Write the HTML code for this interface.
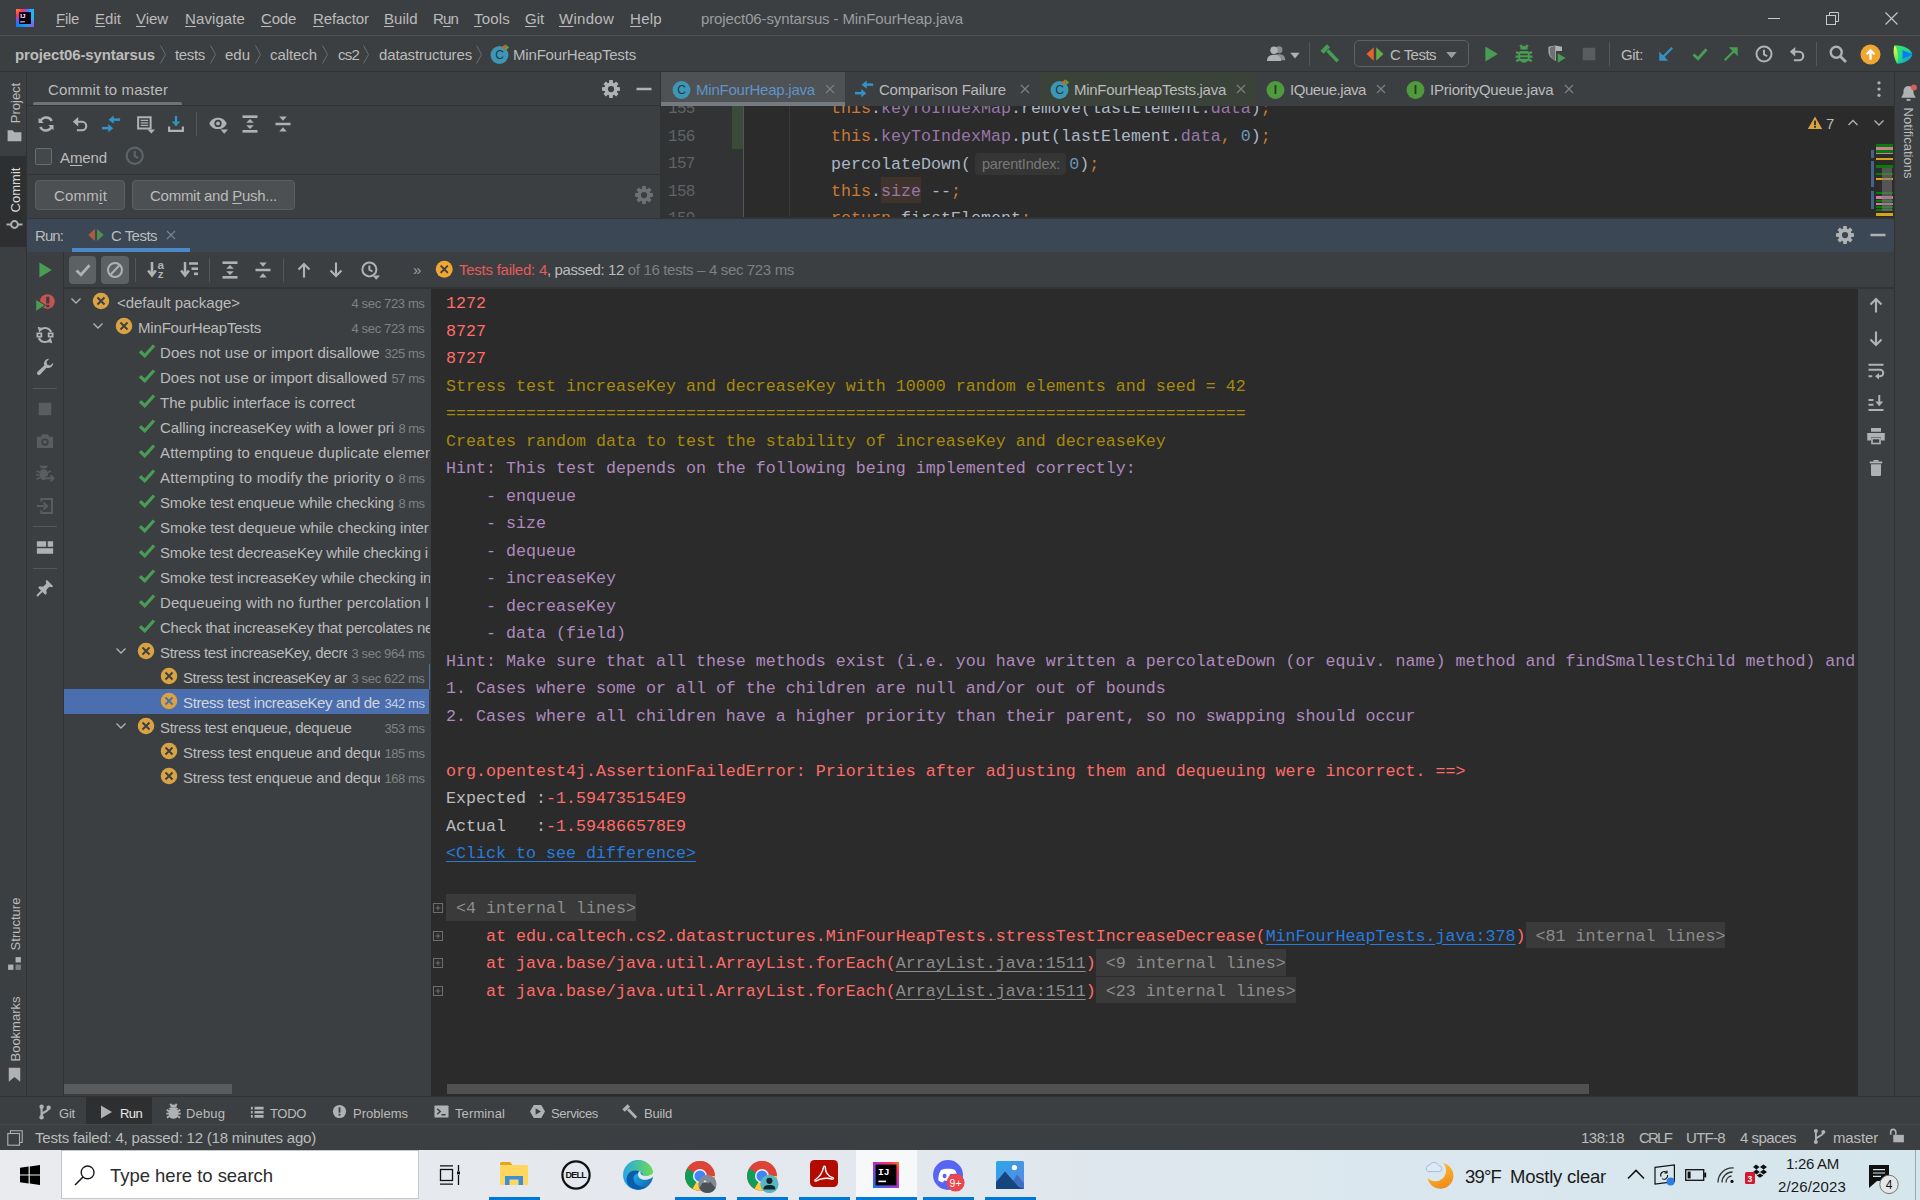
<!DOCTYPE html>
<html lang="en"><head><meta charset="utf-8"><title>project06-syntarsus - MinFourHeap.java</title>
<style>
html,body{margin:0;padding:0;background:#3c3f41;}
body{width:1920px;height:1200px;position:relative;overflow:hidden;font-family:"Liberation Sans",sans-serif;}
div,span.t,svg.i{position:absolute;}
span.t{white-space:pre;}
u{text-decoration:underline;text-underline-offset:1.5px;text-decoration-thickness:1px;}
.clip{overflow:hidden;}
.clip span.t{position:absolute;}
</style></head>
<body>
<div style="left:0px;top:0px;width:1920px;height:36px;background:#3c3f41;"></div>
<div style="left:0px;top:35px;width:1920px;height:1px;background:#515151;"></div>
<svg class="i" style="left:16px;top:9px;" width="18" height="18" viewBox="0 0 18 18"><defs><linearGradient id="ijb" x1="0" y1="0" x2="1" y2="0"><stop offset="0" stop-color="#0d7bf7"/><stop offset="1" stop-color="#20b8fb"/></linearGradient><radialGradient id="ijo" cx="0" cy="0" r="0.8"><stop offset="0" stop-color="#fd8a1c"/><stop offset="0.45" stop-color="#fc2d63"/><stop offset="0.8" stop-color="#b23bd6" stop-opacity="0.6"/><stop offset="1" stop-color="#b23bd6" stop-opacity="0"/></radialGradient><radialGradient id="ijp" cx="1" cy="1" r="0.5"><stop offset="0" stop-color="#9a4be0"/><stop offset="1" stop-color="#9a4be0" stop-opacity="0"/></radialGradient></defs><rect width="18" height="18" fill="url(#ijb)"/><rect width="18" height="18" fill="url(#ijo)"/><rect width="18" height="18" fill="url(#ijp)"/><rect x="3.1" y="3.1" width="11.9" height="11.9" fill="#0c0010"/><text x="4.2" y="8.7" font-family="Liberation Sans,sans-serif" font-weight="700" font-size="6.2" fill="#fff">IJ</text><rect x="4.2" y="12.4" width="4.6" height="0.9" fill="#fff"/></svg>
<span class="t" style="top:9px;line-height:20px;font-size:15px;color:#bbbbbb;left:56px;letter-spacing:-0.293px;"><u>F</u>ile</span>
<span class="t" style="top:9px;line-height:20px;font-size:15px;color:#bbbbbb;left:95px;letter-spacing:0.035px;"><u>E</u>dit</span>
<span class="t" style="top:9px;line-height:20px;font-size:15px;color:#bbbbbb;left:136px;letter-spacing:-0.062px;"><u>V</u>iew</span>
<span class="t" style="top:9px;line-height:20px;font-size:15px;color:#bbbbbb;left:185px;letter-spacing:0.100px;"><u>N</u>avigate</span>
<span class="t" style="top:9px;line-height:20px;font-size:15px;color:#bbbbbb;left:261px;letter-spacing:-0.215px;"><u>C</u>ode</span>
<span class="t" style="top:9px;line-height:20px;font-size:15px;color:#bbbbbb;left:313px;letter-spacing:-0.088px;"><u>R</u>efactor</span>
<span class="t" style="top:9px;line-height:20px;font-size:15px;color:#bbbbbb;left:384px;letter-spacing:0.028px;"><u>B</u>uild</span>
<span class="t" style="top:9px;line-height:20px;font-size:15px;color:#bbbbbb;left:433px;letter-spacing:-0.844px;">R<u>u</u>n</span>
<span class="t" style="top:9px;line-height:20px;font-size:15px;color:#bbbbbb;left:474px;letter-spacing:0.194px;"><u>T</u>ools</span>
<span class="t" style="top:9px;line-height:20px;font-size:15px;color:#bbbbbb;left:525px;letter-spacing:-0.057px;"><u>G</u>it</span>
<span class="t" style="top:9px;line-height:20px;font-size:15px;color:#bbbbbb;left:559px;letter-spacing:0.273px;"><u>W</u>indow</span>
<span class="t" style="top:9px;line-height:20px;font-size:15px;color:#bbbbbb;left:630px;letter-spacing:0.285px;"><u>H</u>elp</span>
<span class="t" style="top:9px;line-height:20px;font-size:15px;color:#9a9da0;left:701px;letter-spacing:-0.126px;">project06-syntarsus - MinFourHeap.java</span>
<div style="left:1768px;top:18px;width:12px;height:1px;background:#c8c8c8;"></div>
<svg class="i" style="left:1826px;top:12px;" width="13" height="13" viewBox="0 0 13 13"><rect x="0.5" y="3.5" width="9" height="9" fill="none" stroke="#c8c8c8" stroke-width="1"/><path d="M3.5 3.5 V0.5 H12.5 V9.5 H9.5" fill="none" stroke="#c8c8c8" stroke-width="1"/></svg>
<svg class="i" style="left:1885px;top:12px;" width="13" height="13" viewBox="0 0 13 13"><path d="M0.5 0.5 L12.5 12.5 M12.5 0.5 L0.5 12.5" stroke="#c8c8c8" stroke-width="1.1"/></svg>
<div style="left:0px;top:36px;width:1920px;height:36px;background:#3c3f41;"></div>
<div style="left:0px;top:71px;width:1920px;height:1px;background:#323232;"></div>
<span class="t" style="top:45px;line-height:20px;font-size:15px;color:#bbbbbb;left:15px;font-weight:700;letter-spacing:-0.135px;">project06-syntarsus</span>
<span class="t" style="top:45px;line-height:20px;font-size:15px;color:#bbbbbb;left:175px;letter-spacing:-0.338px;">tests</span>
<span class="t" style="top:45px;line-height:20px;font-size:15px;color:#bbbbbb;left:225px;letter-spacing:-0.010px;">edu</span>
<span class="t" style="top:45px;line-height:20px;font-size:15px;color:#bbbbbb;left:270px;letter-spacing:-0.076px;">caltech</span>
<span class="t" style="top:45px;line-height:20px;font-size:15px;color:#bbbbbb;left:338px;letter-spacing:-0.781px;">cs2</span>
<span class="t" style="top:45px;line-height:20px;font-size:15px;color:#bbbbbb;left:379px;letter-spacing:-0.146px;">datastructures</span>
<span class="t" style="top:45px;line-height:20px;font-size:15px;color:#bbbbbb;left:513px;letter-spacing:-0.181px;">MinFourHeapTests</span>
<svg class="i" style="left:159px;top:45px;" width="8" height="19" viewBox="0 0 8 19"><path d="M1.5 0.5 L6.5 9.5 L1.5 18.5" fill="none" stroke="#6b6e70" stroke-width="1"/></svg>
<svg class="i" style="left:209px;top:45px;" width="8" height="19" viewBox="0 0 8 19"><path d="M1.5 0.5 L6.5 9.5 L1.5 18.5" fill="none" stroke="#6b6e70" stroke-width="1"/></svg>
<svg class="i" style="left:254px;top:45px;" width="8" height="19" viewBox="0 0 8 19"><path d="M1.5 0.5 L6.5 9.5 L1.5 18.5" fill="none" stroke="#6b6e70" stroke-width="1"/></svg>
<svg class="i" style="left:321px;top:45px;" width="8" height="19" viewBox="0 0 8 19"><path d="M1.5 0.5 L6.5 9.5 L1.5 18.5" fill="none" stroke="#6b6e70" stroke-width="1"/></svg>
<svg class="i" style="left:362px;top:45px;" width="8" height="19" viewBox="0 0 8 19"><path d="M1.5 0.5 L6.5 9.5 L1.5 18.5" fill="none" stroke="#6b6e70" stroke-width="1"/></svg>
<svg class="i" style="left:475px;top:45px;" width="8" height="19" viewBox="0 0 8 19"><path d="M1.5 0.5 L6.5 9.5 L1.5 18.5" fill="none" stroke="#6b6e70" stroke-width="1"/></svg>
<svg class="i" style="left:488.5px;top:43.5px;" width="21" height="21" viewBox="0 0 16 16"><circle cx="8" cy="8.4" r="6.8" fill="#3d96b6"/><text x="8" y="11.6" text-anchor="middle" font-family="Liberation Sans,sans-serif" font-weight="400" font-size="9.2" fill="#1f3a45">C</text><path d="M9.4 0.4 L12.2 2.6 L9.4 4.8 Z" fill="#e05a2b" transform="rotate(180 10.8 2.6)"/><path d="M12.4 0.2 L15.4 2.6 L12.4 5 Z" fill="#57a64a"/></svg>
<svg class="i" style="left:1266px;top:44px;" width="20" height="20" viewBox="0 0 16 16"><circle cx="10.4" cy="4.6" r="2.8" fill="#8a8c8e"/><path d="M5.4 13 C5.4 9.4 7.6 8.2 10.4 8.2 C13.2 8.2 15.4 9.4 15.4 13 Z" fill="#8a8c8e"/><circle cx="6.4" cy="5" r="3" fill="#afb1b3"/><path d="M0.8 13.6 C0.8 9.8 3.2 8.6 6.4 8.6 C9.6 8.6 12 9.8 12 13.6 Z" fill="#afb1b3"/></svg>
<svg class="i" style="left:1289.5px;top:51.5px;" width="10" height="7" viewBox="0 0 10 7"><path d="M0.3 0.8 H9.7 L5 6.4 Z" fill="#afb1b3"/></svg>
<div style="left:1309px;top:42px;width:1px;height:24px;background:#555759;"></div>
<svg class="i" style="left:1320px;top:44px;" width="20" height="20" viewBox="0 0 16 16"><path d="M1.6 6.6 L6.8 1.4" stroke="#499c54" stroke-width="3.6" fill="none"/><path d="M6 5.2 L14.2 13.8" stroke="#499c54" stroke-width="2.7" fill="none"/></svg>
<div style="left:1354px;top:40px;width:115px;height:27px;border:1px solid #5e6163;border-radius:5px;box-sizing:border-box;"></div>
<svg class="i" style="left:1365px;top:44px;" width="20" height="20" viewBox="0 0 16 16"><path d="M7 2.6 V13.4 L1.2 8 Z" fill="#e8632c"/><path d="M9 2.6 V13.4 L14.8 8 Z" fill="#5fad46"/></svg>
<span class="t" style="top:45px;line-height:20px;font-size:15px;color:#bbbbbb;left:1390px;letter-spacing:-0.536px;">C Tests</span>
<svg class="i" style="left:1446px;top:50.5px;" width="11" height="8" viewBox="0 0 10 7"><path d="M0.3 0.8 H9.7 L5 6.4 Z" fill="#9a9c9e"/></svg>
<svg class="i" style="left:1481px;top:44px;" width="20" height="20" viewBox="0 0 16 16"><path d="M3.5 2 L13.5 8 L3.5 14 Z" fill="#499c54"/></svg>
<svg class="i" style="left:1514px;top:44px;" width="20" height="20" viewBox="0 0 16 16"><ellipse cx="8" cy="9.6" rx="4.7" ry="5.3" fill="#499c54"/><path d="M5 4.4 A3 3 0 0 1 11 4.4 Z" fill="#499c54"/><path d="M1.6 6.4 L4.4 7.8 M1.2 10 H4 M1.8 13.8 L4.4 12.2 M14.4 6.4 L11.6 7.8 M14.8 10 H12 M14.2 13.8 L11.6 12.2 M5 0.8 L6.6 3 M11 0.8 L9.4 3" stroke="#499c54" stroke-width="1.8" fill="none"/><path d="M5 8.4 H11 M5 11.2 H11" stroke="#3c3f41" stroke-width="1.2"/><path d="M3.6 5.2 H12.4" stroke="#3c3f41" stroke-width="0.9"/></svg>
<svg class="i" style="left:1546px;top:44px;" width="20" height="20" viewBox="0 0 16 16"><path d="M2 2.2 L7.4 1.2 L12.8 2.2 V5.6 H8 V13.6 C4.6 12 2 9.4 2 6.2 Z" fill="#afb1b3"/><path d="M7.4 1.2 V13.4 C4.8 11.8 3 9.6 3 6.2 V3 Z" fill="#6e7173"/><path d="M9.4 7.4 L15.6 11.2 L9.4 15 Z" fill="#499c54"/></svg>
<svg class="i" style="left:1579px;top:44px;" width="20" height="20" viewBox="0 0 16 16"><rect x="3" y="3" width="10" height="10" fill="#5a5d5f"/></svg>
<div style="left:1609px;top:42px;width:1px;height:24px;background:#555759;"></div>
<span class="t" style="top:45px;line-height:20px;font-size:15px;color:#bbbbbb;left:1621px;letter-spacing:-0.336px;">Git:</span>
<svg class="i" style="left:1656px;top:44px;" width="20" height="20" viewBox="0 0 16 16"><path d="M13 3 L4 12" stroke="#3592c4" stroke-width="1.9"/><path d="M2.6 13.4 V6.2 L9.8 13.4 Z" fill="#3592c4"/></svg>
<svg class="i" style="left:1690px;top:44px;" width="20" height="20" viewBox="0 0 16 16"><path d="M2.8 8.4 L6.4 11.8 L13.2 4.2" fill="none" stroke="#499c54" stroke-width="2.3"/></svg>
<svg class="i" style="left:1721px;top:44px;" width="20" height="20" viewBox="0 0 16 16"><path d="M3 13 L12 4" stroke="#499c54" stroke-width="1.9"/><path d="M13.4 2.6 V9.8 L6.2 2.6 Z" fill="#499c54"/></svg>
<svg class="i" style="left:1754px;top:44px;" width="20" height="20" viewBox="0 0 16 16"><circle cx="8" cy="8" r="6" fill="none" stroke="#afb1b3" stroke-width="1.6"/><path d="M8 4.5 V8.3 L10.6 9.8" fill="none" stroke="#afb1b3" stroke-width="1.6"/></svg>
<svg class="i" style="left:1787px;top:44px;" width="20" height="20" viewBox="0 0 16 16"><path d="M5 6.2 H9.6 A3.4 3.4 0 0 1 9.6 13 H5.5" fill="none" stroke="#afb1b3" stroke-width="1.7"/><path d="M6.6 2.4 V10 L2.2 6.2 Z" fill="#afb1b3"/></svg>
<div style="left:1816px;top:42px;width:1px;height:24px;background:#555759;"></div>
<svg class="i" style="left:1828px;top:44px;" width="20" height="20" viewBox="0 0 16 16"><circle cx="6.6" cy="6.6" r="4.4" fill="none" stroke="#afb1b3" stroke-width="1.9"/><path d="M9.8 9.8 L14.4 14.4" stroke="#afb1b3" stroke-width="2.2"/></svg>
<svg class="i" style="left:1859.5px;top:43.5px;" width="21" height="21" viewBox="0 0 16 16"><circle cx="8" cy="8" r="7.6" fill="#f0a732"/><path d="M8 12 V5.2 M5 7.8 L8 4.8 L11 7.8" stroke="#fff" stroke-width="1.8" fill="none"/></svg>
<svg class="i" style="left:1891.5px;top:43.5px;" width="21" height="21" viewBox="0 0 16 16"><defs><linearGradient id="cwmg" x1="0" y1="0" x2="1" y2="1"><stop offset="0" stop-color="#3bea62"/><stop offset="0.5" stop-color="#21d789"/><stop offset="1" stop-color="#087cfa"/></linearGradient><linearGradient id="cwmg2" x1="0" y1="0" x2="0" y2="1"><stop offset="0" stop-color="#fcf84a"/><stop offset="1" stop-color="#3bea62"/></linearGradient></defs><path d="M2 1 C9 1 15 4 15.4 8 C15 12 9 15 4 15 Z" fill="url(#cwmg)"/><path d="M2 1 C4.6 4 5 11 4 15 C1 11 0.6 4 2 1 Z" fill="url(#cwmg2)"/><path d="M8 4.6 L15.4 8 L8 11.4 Z" fill="#087cfa"/></svg>
<div style="left:0px;top:72px;width:26px;height:1024px;background:#3c3f41;"></div>
<div style="left:26px;top:72px;width:1px;height:1024px;background:#323232;"></div>
<div style="left:0px;top:156px;width:26px;height:91px;background:#2d2f30;"></div>
<span class="t" style="left:16px;top:102.5px;font-size:13px;color:#bbbbbb;line-height:18px;transform:translate(-50%,-50%) rotate(-90deg);">Project</span>
<svg class="i" style="left:5.5px;top:126.5px;" width="17" height="17" viewBox="0 0 16 16"><path d="M1.5 3 H6.2 L7.8 5 H14.5 V13.5 H1.5 Z" fill="#afb1b3"/></svg>
<span class="t" style="left:16px;top:190px;font-size:13px;color:#d8d8d8;line-height:18px;transform:translate(-50%,-50%) rotate(-90deg);">Commit</span>
<svg class="i" style="left:5.5px;top:216px;" width="17" height="17" viewBox="0 0 16 16"><circle cx="8" cy="8" r="3.2" fill="none" stroke="#afb1b3" stroke-width="1.9"/><path d="M0.5 8 H4.6 M11.4 8 H15.5" stroke="#afb1b3" stroke-width="1.9"/></svg>
<span class="t" style="left:16px;top:924px;font-size:13px;color:#bbbbbb;line-height:18px;transform:translate(-50%,-50%) rotate(-90deg);">Structure</span>
<svg class="i" style="left:5.9px;top:954.5px;" width="17" height="17" viewBox="0 0 16 16"><rect x="9" y="2" width="5" height="5" fill="#afb1b3"/><rect x="2" y="9" width="5" height="5" fill="#afb1b3"/><rect x="9" y="9" width="5" height="5" fill="#7f8284"/></svg>
<span class="t" style="left:16px;top:1029px;font-size:13px;color:#bbbbbb;line-height:18px;transform:translate(-50%,-50%) rotate(-90deg);">Bookmarks</span>
<svg class="i" style="left:5.5px;top:1065.5px;" width="17" height="17" viewBox="0 0 16 16"><path d="M2.6 1.6 H13.4 V14.8 L8 10.4 L2.6 14.8 Z" fill="#afb1b3"/></svg>
<div style="left:1894px;top:72px;width:26px;height:1024px;background:#3c3f41;"></div>
<div style="left:1894px;top:72px;width:1px;height:1024px;background:#323232;"></div>
<svg class="i" style="left:1898.5px;top:83.5px;" width="19" height="19" viewBox="0 0 16 16"><path d="M8 1.6 C5 1.6 3.8 4 3.8 6.4 C3.8 9.4 2.4 10 2 11.6 H14 C13.6 10 12.2 9.4 12.2 6.4 C12.2 4 11 1.6 8 1.6 Z" fill="#afb1b3"/><rect x="6.4" y="12.6" width="3.2" height="1.6" fill="#afb1b3"/><circle cx="12.6" cy="3" r="2.5" fill="#db5c5c"/></svg>
<span class="t" style="left:1908px;top:143px;font-size:13px;color:#bbbbbb;line-height:18px;transform:translate(-50%,-50%) rotate(90deg);">Notifications</span>
<div style="left:27px;top:72px;width:633px;height:146px;background:#3c3f41;"></div>
<div style="left:660px;top:72px;width:1px;height:146px;background:#323232;"></div>
<span class="t" style="top:80px;line-height:20px;font-size:15px;color:#bbbbbb;left:48px;letter-spacing:0.103px;">Commit to master</span>
<div style="left:33px;top:102px;width:149px;height:4px;background:#6e7376;border-radius:2px 2px 0 0;"></div>
<div style="left:27px;top:105px;width:633px;height:1px;background:#323232;"></div>
<svg class="i" style="left:601px;top:79px;" width="20" height="20" viewBox="0 0 16 16"><path d="M6.43 2.94 L6.62 0.83 L9.38 0.83 L9.57 2.94 L10.47 3.31 L12.09 1.96 L14.04 3.91 L12.69 5.53 L13.06 6.43 L15.17 6.62 L15.17 9.38 L13.06 9.57 L12.69 10.47 L14.04 12.09 L12.09 14.04 L10.47 12.69 L9.57 13.06 L9.38 15.17 L6.62 15.17 L6.43 13.06 L5.53 12.69 L3.91 14.04 L1.96 12.09 L3.31 10.47 L2.94 9.57 L0.83 9.38 L0.83 6.62 L2.94 6.43 L3.31 5.53 L1.96 3.91 L3.91 1.96 L5.53 3.31 Z M8 5.5 A2.5 2.5 0 1 0 8 10.5 A2.5 2.5 0 1 0 8 5.5 Z" fill="#afb1b3" fill-rule="evenodd"/></svg>
<svg class="i" style="left:633.5px;top:79px;" width="20" height="20" viewBox="0 0 16 16"><rect x="2" y="7" width="12" height="2" fill="#afb1b3"/></svg>
<svg class="i" style="left:36px;top:114px;" width="20" height="20" viewBox="0 0 16 16"><g transform="translate(16 0) scale(-1 1)"><path d="M12.6 6.2 A5 5 0 0 0 3.4 5.6" fill="none" stroke="#afb1b3" stroke-width="2"/><path d="M3.4 9.8 A5 5 0 0 0 12.6 10.4" fill="none" stroke="#afb1b3" stroke-width="2"/><path d="M14 3 V7.2 H9.8 Z" fill="#afb1b3"/><path d="M2 13 V8.8 H6.2 Z" fill="#afb1b3"/></g></svg>
<svg class="i" style="left:70px;top:114px;" width="20" height="20" viewBox="0 0 16 16"><path d="M5 6.2 H9.6 A3.4 3.4 0 0 1 9.6 13 H5.5" fill="none" stroke="#afb1b3" stroke-width="1.7"/><path d="M6.6 2.4 V10 L2.2 6.2 Z" fill="#afb1b3"/></svg>
<svg class="i" style="left:101px;top:114px;" width="20" height="20" viewBox="0 0 16 16"><rect x="0.8" y="10.3" width="5.6" height="2" fill="#3592c4"/><path d="M5.8 8 L9.8 11.3 L5.8 14.6 Z" fill="#3592c4"/><rect x="9.6" y="3.5" width="5.7" height="2" fill="#3592c4"/><path d="M10.2 1.2 L6 4.5 L10.2 7.8 Z" fill="#3592c4"/></svg>
<svg class="i" style="left:135px;top:114px;" width="20" height="20" viewBox="0 0 16 16"><path d="M2.5 2.5 H12.5 V11.5 H2.5 Z" fill="none" stroke="#afb1b3" stroke-width="1.6"/><path d="M4.5 5 H10.5 M4.5 7 H10.5 M4.5 9 H10.5" stroke="#afb1b3" stroke-width="1"/><path d="M10 12.3 H16 L13 15.6 Z" fill="#afb1b3"/></svg>
<svg class="i" style="left:166px;top:114px;" width="20" height="20" viewBox="0 0 16 16"><path d="M2.5 10 V13.5 H13.5 V10" fill="none" stroke="#afb1b3" stroke-width="1.7"/><path d="M8 1.5 V7" stroke="#3592c4" stroke-width="1.8"/><path d="M4.6 6 H11.4 L8 10 Z" fill="#3592c4"/></svg>
<div style="left:196px;top:112px;width:1px;height:24px;background:#555759;"></div>
<svg class="i" style="left:208px;top:114px;" width="20" height="20" viewBox="0 0 16 16"><path d="M1 7.5 C3 3.6 6 3 8 3 C10 3 13 3.6 15 7.5 C13 11.4 10 12 8 12 C6 12 3 11.4 1 7.5 Z" fill="#afb1b3"/><circle cx="8" cy="7.5" r="2.9" fill="#3c3f41"/><circle cx="8" cy="7.5" r="1.5" fill="#afb1b3"/><path d="M10 12.4 H16 L13 15.7 Z" fill="#afb1b3"/></svg>
<svg class="i" style="left:240px;top:114px;" width="20" height="20" viewBox="0 0 16 16"><rect x="2" y="1.1" width="12" height="2.1" fill="#afb1b3"/><rect x="2" y="12.8" width="12" height="2.1" fill="#afb1b3"/><path d="M5 7 L8 4 L11 7 Z" fill="#afb1b3"/><path d="M5 9 L8 12 L11 9 Z" fill="#afb1b3"/></svg>
<svg class="i" style="left:273px;top:114px;" width="20" height="20" viewBox="0 0 16 16"><rect x="2" y="7" width="12" height="2" fill="#afb1b3"/><path d="M5 2 L8 5.4 L11 2 Z" fill="#afb1b3"/><path d="M5 14 L8 10.6 L11 14 Z" fill="#afb1b3"/></svg>
<div style="left:35px;top:148px;width:17px;height:17px;box-sizing:border-box;border:1px solid #6b6b6b;border-radius:2px;background:#43494a;"></div>
<span class="t" style="top:148px;line-height:20px;font-size:15px;color:#bbbbbb;left:60px;letter-spacing:-0.106px;">A<u>m</u>end</span>
<svg class="i" style="left:124.25px;top:145.25px;" width="21.5" height="21.5" viewBox="0 0 16 16"><circle cx="8" cy="8" r="6" fill="none" stroke="#5c6568" stroke-width="1.6"/><path d="M8 4.5 V8.3 L10.6 9.8" fill="none" stroke="#5c6568" stroke-width="1.6"/></svg>
<div style="left:27px;top:174px;width:633px;height:1px;background:#323232;"></div>
<div style="left:35px;top:180px;width:90px;height:30px;box-sizing:border-box;border:1px solid #5e6060;border-radius:4px;background:#4c5052;"></div>
<div style="left:132px;top:180px;width:163px;height:30px;box-sizing:border-box;border:1px solid #5e6060;border-radius:4px;background:#4c5052;"></div>
<span class="t" style="top:185.5px;line-height:20px;font-size:15px;color:#bbbbbb;left:54px;letter-spacing:0.221px;">Comm<u>i</u>t</span>
<span class="t" style="top:185.5px;line-height:20px;font-size:15px;color:#bbbbbb;left:150px;letter-spacing:-0.262px;">Commit and <u>P</u>ush...</span>
<svg class="i" style="left:633.5px;top:185px;" width="20" height="20" viewBox="0 0 16 16"><path d="M6.43 2.94 L6.62 0.83 L9.38 0.83 L9.57 2.94 L10.47 3.31 L12.09 1.96 L14.04 3.91 L12.69 5.53 L13.06 6.43 L15.17 6.62 L15.17 9.38 L13.06 9.57 L12.69 10.47 L14.04 12.09 L12.09 14.04 L10.47 12.69 L9.57 13.06 L9.38 15.17 L6.62 15.17 L6.43 13.06 L5.53 12.69 L3.91 14.04 L1.96 12.09 L3.31 10.47 L2.94 9.57 L0.83 9.38 L0.83 6.62 L2.94 6.43 L3.31 5.53 L1.96 3.91 L3.91 1.96 L5.53 3.31 Z M8 5.5 A2.5 2.5 0 1 0 8 10.5 A2.5 2.5 0 1 0 8 5.5 Z" fill="#6e7173" fill-rule="evenodd"/></svg>
<div style="left:661px;top:72px;width:1233px;height:34px;background:#3c3f41;"></div>
<div style="left:661px;top:72px;width:184px;height:34px;background:#4e5254;"></div>
<div style="left:661px;top:102px;width:184px;height:4px;background:#747a80;"></div>
<div style="left:1039px;top:72px;width:217px;height:34px;background:#3a4239;"></div>
<svg class="i" style="left:670.5px;top:78.5px;" width="21" height="21" viewBox="0 0 16 16"><circle cx="8" cy="8.4" r="6.8" fill="#3d96b6"/><text x="8" y="11.6" text-anchor="middle" font-family="Liberation Sans,sans-serif" font-weight="400" font-size="9.2" fill="#1f3a45">C</text></svg>
<span class="t" style="top:80px;line-height:20px;font-size:15px;color:#6192c7;left:696px;letter-spacing:-0.223px;">MinFourHeap.java</span>
<svg class="i" style="left:822px;top:81px;" width="16" height="16" viewBox="0 0 16 16"><path d="M4 4 L12 12 M12 4 L4 12" stroke="#7e8183" stroke-width="1.1" fill="none"/></svg>
<svg class="i" style="left:854px;top:79px;" width="20" height="20" viewBox="0 0 16 16"><rect x="0.8" y="10.3" width="5.6" height="2" fill="#3592c4"/><path d="M5.8 8 L9.8 11.3 L5.8 14.6 Z" fill="#3592c4"/><rect x="9.6" y="3.5" width="5.7" height="2" fill="#3592c4"/><path d="M10.2 1.2 L6 4.5 L10.2 7.8 Z" fill="#3592c4"/></svg>
<span class="t" style="top:80px;line-height:20px;font-size:15px;color:#bbbbbb;left:879px;letter-spacing:-0.216px;">Comparison Failure</span>
<svg class="i" style="left:1017px;top:81px;" width="16" height="16" viewBox="0 0 16 16"><path d="M4 4 L12 12 M12 4 L4 12" stroke="#7e8183" stroke-width="1.1" fill="none"/></svg>
<svg class="i" style="left:1048.5px;top:78.5px;" width="21" height="21" viewBox="0 0 16 16"><circle cx="8" cy="8.4" r="6.8" fill="#3d96b6"/><text x="8" y="11.6" text-anchor="middle" font-family="Liberation Sans,sans-serif" font-weight="400" font-size="9.2" fill="#1f3a45">C</text><path d="M9.4 0.4 L12.2 2.6 L9.4 4.8 Z" fill="#e05a2b" transform="rotate(180 10.8 2.6)"/><path d="M12.4 0.2 L15.4 2.6 L12.4 5 Z" fill="#57a64a"/></svg>
<span class="t" style="top:80px;line-height:20px;font-size:15px;color:#bbbbbb;left:1074px;letter-spacing:-0.266px;">MinFourHeapTests.java</span>
<svg class="i" style="left:1233px;top:81px;" width="16" height="16" viewBox="0 0 16 16"><path d="M4 4 L12 12 M12 4 L4 12" stroke="#7e8183" stroke-width="1.1" fill="none"/></svg>
<svg class="i" style="left:1264.5px;top:78.5px;" width="21" height="21" viewBox="0 0 16 16"><circle cx="8" cy="8.4" r="6.8" fill="#4f9a3d"/><text x="8" y="11.6" text-anchor="middle" font-family="Liberation Sans,sans-serif" font-weight="700" font-size="9.2" fill="#22401c">I</text></svg>
<span class="t" style="top:80px;line-height:20px;font-size:15px;color:#bbbbbb;left:1290px;letter-spacing:-0.445px;">IQueue.java</span>
<svg class="i" style="left:1373px;top:81px;" width="16" height="16" viewBox="0 0 16 16"><path d="M4 4 L12 12 M12 4 L4 12" stroke="#7e8183" stroke-width="1.1" fill="none"/></svg>
<svg class="i" style="left:1404.5px;top:78.5px;" width="21" height="21" viewBox="0 0 16 16"><circle cx="8" cy="8.4" r="6.8" fill="#4f9a3d"/><text x="8" y="11.6" text-anchor="middle" font-family="Liberation Sans,sans-serif" font-weight="700" font-size="9.2" fill="#22401c">I</text></svg>
<span class="t" style="top:80px;line-height:20px;font-size:15px;color:#bbbbbb;left:1430px;letter-spacing:-0.214px;">IPriorityQueue.java</span>
<svg class="i" style="left:1561px;top:81px;" width="16" height="16" viewBox="0 0 16 16"><path d="M4 4 L12 12 M12 4 L4 12" stroke="#7e8183" stroke-width="1.1" fill="none"/></svg>
<svg class="i" style="left:1869px;top:79px;" width="20" height="20" viewBox="0 0 16 16"><circle cx="8" cy="3" r="1.3" fill="#afb1b3"/><circle cx="8" cy="8" r="1.3" fill="#afb1b3"/><circle cx="8" cy="13" r="1.3" fill="#afb1b3"/></svg>
<div style="left:661px;top:106px;width:83px;height:111px;background:#313335;"></div>
<div style="left:744px;top:106px;width:1150px;height:111px;background:#2b2b2b;"></div>
<div style="left:743px;top:106px;width:1px;height:111px;background:#555555;"></div>
<div style="left:732px;top:106px;width:11px;height:43px;background:#384c38;"></div>
<div style="left:789px;top:106px;width:1px;height:111px;background:#393939;"></div>
<div class="clip" style="left:661px;top:106px;width:1233px;height:111px;">
<span class="t" style="left:7px;top:-7.75px;line-height:22px;font-size:16px;font-family:'Liberation Mono', monospace;color:#606366;letter-spacing:-0.7px;">155</span>
<span class="t" style="left:170px;top:-7.75px;line-height:22px;font-size:16.67px;font-family:'Liberation Mono', monospace;color:#a9b7c6;"><span style="color:#cc7832">this</span><span style="color:#a9b7c6">.</span><span style="color:#9876aa">keyToIndexMap</span><span style="color:#a9b7c6">.remove(lastElement.</span><span style="color:#9876aa">data</span><span style="color:#a9b7c6">)</span><span style="color:#cc7832">;</span></span>
<span class="t" style="left:7px;top:19.75px;line-height:22px;font-size:16px;font-family:'Liberation Mono', monospace;color:#606366;letter-spacing:-0.7px;">156</span>
<span class="t" style="left:170px;top:19.75px;line-height:22px;font-size:16.67px;font-family:'Liberation Mono', monospace;color:#a9b7c6;"><span style="color:#cc7832">this</span><span style="color:#a9b7c6">.</span><span style="color:#9876aa">keyToIndexMap</span><span style="color:#a9b7c6">.put(lastElement.</span><span style="color:#9876aa">data</span><span style="color:#cc7832">,</span> <span style="color:#6897bb">0</span><span style="color:#a9b7c6">)</span><span style="color:#cc7832">;</span></span>
<span class="t" style="left:7px;top:47.25px;line-height:22px;font-size:16px;font-family:'Liberation Mono', monospace;color:#606366;letter-spacing:-0.7px;">157</span>
<span class="t" style="left:170px;top:47.25px;line-height:22px;font-size:16.67px;font-family:'Liberation Mono', monospace;color:#a9b7c6;"><span style="color:#a9b7c6">percolateDown(</span><span style="display:inline-block;vertical-align:baseline;margin:0 3px 0 4px;padding:0 6px 0 7px;background:#353535;border-radius:4px;color:#787878;font-family:'Liberation Sans', sans-serif;font-size:14.5px;letter-spacing:-0.2px;line-height:22px;">parentIndex:</span><span style="color:#6897bb">0</span><span style="color:#a9b7c6">)</span><span style="color:#cc7832">;</span></span>
<span class="t" style="left:7px;top:74.75px;line-height:22px;font-size:16px;font-family:'Liberation Mono', monospace;color:#606366;letter-spacing:-0.7px;">158</span>
<span class="t" style="left:170px;top:74.75px;line-height:22px;font-size:16.67px;font-family:'Liberation Mono', monospace;color:#a9b7c6;"><span style="color:#cc7832">this</span><span style="color:#a9b7c6">.</span><span style="color:#9876aa;background:#40332b;padding:5px 0 2.5px;">size</span><span style="color:#a9b7c6"> --</span><span style="color:#cc7832">;</span></span>
<span class="t" style="left:7px;top:102.25px;line-height:22px;font-size:16px;font-family:'Liberation Mono', monospace;color:#606366;letter-spacing:-0.7px;">159</span>
<span class="t" style="left:170px;top:102.25px;line-height:22px;font-size:16.67px;font-family:'Liberation Mono', monospace;color:#a9b7c6;"><span style="color:#cc7832">return</span><span style="color:#a9b7c6"> firstElement</span><span style="color:#cc7832">;</span></span>
</div>
<svg class="i" style="left:1807px;top:115px;" width="16" height="16" viewBox="0 0 16 16"><path d="M8 1.4 L15.2 14 H0.8 Z" fill="#d9a343"/><rect x="7.1" y="5.6" width="1.8" height="4.6" fill="#2b2b2b"/><rect x="7.1" y="11" width="1.8" height="1.8" fill="#2b2b2b"/></svg>
<span class="t" style="top:114px;line-height:20px;font-size:15px;color:#bbbbbb;left:1826px;">7</span>
<svg class="i" style="left:1845px;top:115px;" width="16" height="16" viewBox="0 0 16 16"><path d="M3.5 10 L8 5.5 L12.5 10" fill="none" stroke="#afb1b3" stroke-width="1.4"/></svg>
<svg class="i" style="left:1871px;top:115px;" width="16" height="16" viewBox="0 0 16 16"><path d="M3.5 5.5 L8 10 L12.5 5.5" fill="none" stroke="#afb1b3" stroke-width="1.4"/></svg>
<div style="left:1876px;top:144px;width:17px;height:3px;background:#0a7a0a;"></div>
<div style="left:1876px;top:147px;width:17px;height:3px;background:#c97f9a;"></div>
<div style="left:1876px;top:150px;width:17px;height:3px;background:#0a7a0a;"></div>
<div style="left:1876px;top:153px;width:17px;height:1px;background:#c97f9a;"></div>
<div style="left:1876px;top:158px;width:17px;height:2px;background:#d9a21b;"></div>
<div style="left:1876px;top:165px;width:17px;height:3px;background:#0a7a0a;"></div>
<div style="left:1876px;top:173px;width:17px;height:2px;background:#0a7a0a;"></div>
<div style="left:1876px;top:178px;width:17px;height:2px;background:#d9a21b;"></div>
<div style="left:1876px;top:192px;width:17px;height:2px;background:#0a7a0a;"></div>
<div style="left:1876px;top:196px;width:17px;height:3px;background:#c97f9a;"></div>
<div style="left:1876px;top:200px;width:17px;height:2px;background:#0a7a0a;"></div>
<div style="left:1876px;top:203px;width:17px;height:2px;background:#c97f9a;"></div>
<div style="left:1876px;top:206px;width:17px;height:2px;background:#0a7a0a;"></div>
<div style="left:1876px;top:209px;width:17px;height:2px;background:#0a7a0a;"></div>
<div style="left:1876px;top:213px;width:17px;height:3px;background:#d9a21b;"></div>
<div style="left:1871px;top:150px;width:3px;height:8px;background:#44628a;"></div>
<div style="left:1871px;top:161px;width:3px;height:26px;background:#44628a;"></div>
<div style="left:1871px;top:191px;width:3px;height:18px;background:#44628a;"></div>
<div style="left:1882px;top:168px;width:10px;height:43px;background:rgba(120,120,120,0.55);"></div>
<div style="left:661px;top:217px;width:1233px;height:1px;background:#323232;"></div>
<div style="left:27px;top:218px;width:1867px;height:1px;background:#333638;"></div>
<div style="left:27px;top:219px;width:1867px;height:33px;background:#3b4754;"></div>
<span class="t" style="top:226px;line-height:20px;font-size:15px;color:#bbbbbb;left:35px;letter-spacing:-0.922px;">Run:</span>
<svg class="i" style="left:87px;top:226px;" width="18" height="18" viewBox="0 0 16 16"><path d="M7 2.6 V13.4 L1.2 8 Z" fill="#b35a3c"/><path d="M9 2.6 V13.4 L14.8 8 Z" fill="#4f8f4c"/></svg>
<span class="t" style="top:226px;line-height:20px;font-size:15px;color:#bbbbbb;left:111px;letter-spacing:-0.536px;">C Tests</span>
<svg class="i" style="left:163px;top:227px;" width="16" height="16" viewBox="0 0 16 16"><path d="M4 4 L12 12 M12 4 L4 12" stroke="#7a8590" stroke-width="1.1" fill="none"/></svg>
<div style="left:72px;top:248px;width:118px;height:4px;background:#4a88c7;"></div>
<svg class="i" style="left:1835px;top:225px;" width="20" height="20" viewBox="0 0 16 16"><path d="M6.43 2.94 L6.62 0.83 L9.38 0.83 L9.57 2.94 L10.47 3.31 L12.09 1.96 L14.04 3.91 L12.69 5.53 L13.06 6.43 L15.17 6.62 L15.17 9.38 L13.06 9.57 L12.69 10.47 L14.04 12.09 L12.09 14.04 L10.47 12.69 L9.57 13.06 L9.38 15.17 L6.62 15.17 L6.43 13.06 L5.53 12.69 L3.91 14.04 L1.96 12.09 L3.31 10.47 L2.94 9.57 L0.83 9.38 L0.83 6.62 L2.94 6.43 L3.31 5.53 L1.96 3.91 L3.91 1.96 L5.53 3.31 Z M8 5.5 A2.5 2.5 0 1 0 8 10.5 A2.5 2.5 0 1 0 8 5.5 Z" fill="#afb1b3" fill-rule="evenodd"/></svg>
<svg class="i" style="left:1868px;top:225px;" width="20" height="20" viewBox="0 0 16 16"><rect x="2" y="7" width="12" height="2" fill="#afb1b3"/></svg>
<div style="left:27px;top:252px;width:1867px;height:37px;background:#3c3f41;"></div>
<div style="left:63px;top:252px;width:1px;height:844px;background:#323232;"></div>
<svg class="i" style="left:35px;top:260px;" width="20" height="20" viewBox="0 0 16 16"><path d="M3.5 2 L13.5 8 L3.5 14 Z" fill="#499c54"/></svg>
<div style="left:69px;top:256px;width:27px;height:28px;background:#5c6164;border-radius:4px;"></div>
<div style="left:101px;top:256px;width:28px;height:28px;background:#5c6164;border-radius:4px;"></div>
<svg class="i" style="left:72.5px;top:260px;" width="20" height="20" viewBox="0 0 16 16"><path d="M2.8 8.4 L6.4 11.8 L13.2 4.2" fill="none" stroke="#afb1b3" stroke-width="2.2"/></svg>
<svg class="i" style="left:105px;top:260px;" width="20" height="20" viewBox="0 0 16 16"><circle cx="8" cy="8" r="5.6" fill="none" stroke="#afb1b3" stroke-width="1.6"/><path d="M4.6 11.6 L11.4 4.4" stroke="#afb1b3" stroke-width="1.6"/></svg>
<div style="left:135px;top:258px;width:1px;height:24px;background:#555759;"></div>
<svg class="i" style="left:146px;top:260px;" width="20" height="20" viewBox="0 0 16 16"><path d="M4.8 1.6 V11.6 M1.7 8.4 L4.8 12.4 L7.9 8.4" fill="none" stroke="#afb1b3" stroke-width="2"/><text x="9.2" y="6.9" font-family="Liberation Sans,sans-serif" font-weight="700" font-size="9.4" fill="#afb1b3">a</text><text x="9.4" y="14.2" font-family="Liberation Sans,sans-serif" font-weight="700" font-size="9.4" fill="#afb1b3">z</text></svg>
<svg class="i" style="left:179px;top:260px;" width="20" height="20" viewBox="0 0 16 16"><path d="M4.8 1.6 V11.6 M1.7 8.4 L4.8 12.4 L7.9 8.4" fill="none" stroke="#afb1b3" stroke-width="2"/><rect x="8" y="1.8" width="7.2" height="2" fill="#afb1b3"/><rect x="10" y="5.9" width="5.2" height="2.1" fill="#afb1b3"/><rect x="12" y="10" width="3.2" height="2.1" fill="#afb1b3"/></svg>
<div style="left:209px;top:258px;width:1px;height:24px;background:#555759;"></div>
<svg class="i" style="left:220px;top:260px;" width="20" height="20" viewBox="0 0 16 16"><rect x="2" y="1.1" width="12" height="2.1" fill="#afb1b3"/><rect x="2" y="12.8" width="12" height="2.1" fill="#afb1b3"/><path d="M5 7 L8 4 L11 7 Z" fill="#afb1b3"/><path d="M5 9 L8 12 L11 9 Z" fill="#afb1b3"/></svg>
<svg class="i" style="left:253px;top:260px;" width="20" height="20" viewBox="0 0 16 16"><rect x="2" y="7" width="12" height="2" fill="#afb1b3"/><path d="M5 2 L8 5.4 L11 2 Z" fill="#afb1b3"/><path d="M5 14 L8 10.6 L11 14 Z" fill="#afb1b3"/></svg>
<div style="left:283px;top:258px;width:1px;height:24px;background:#555759;"></div>
<svg class="i" style="left:294px;top:260px;" width="20" height="20" viewBox="0 0 16 16"><path d="M8 14 V3.5 M3.6 7.6 L8 3.2 L12.4 7.6" fill="none" stroke="#afb1b3" stroke-width="1.7"/></svg>
<svg class="i" style="left:326px;top:260px;" width="20" height="20" viewBox="0 0 16 16"><path d="M8 2 V12.5 M3.6 8.4 L8 12.8 L12.4 8.4" fill="none" stroke="#afb1b3" stroke-width="1.7"/></svg>
<svg class="i" style="left:360px;top:260px;" width="20" height="20" viewBox="0 0 16 16"><circle cx="7.5" cy="7.5" r="5.6" fill="none" stroke="#afb1b3" stroke-width="1.6"/><path d="M7.5 4.3 V7.8 L10 9.2" fill="none" stroke="#afb1b3" stroke-width="1.6"/><path d="M10 12.4 H16 L13 15.7 Z" fill="#afb1b3"/></svg>
<span class="t" style="top:259.5px;line-height:20px;font-size:15px;color:#9da0a2;left:413px;">»</span>
<svg class="i" style="left:433.75px;top:258.75px;" width="20.5" height="20.5" viewBox="0 0 16 16"><circle cx="8" cy="8" r="6.6" fill="#f0a732"/><path d="M5.2 5.2 L10.8 10.8 M10.8 5.2 L5.2 10.8" stroke="#3c3f41" stroke-width="1.5" fill="none"/></svg>
<span class="t" style="top:259.5px;line-height:20px;font-size:15px;color:#e55a5a;left:459px;letter-spacing:-0.248px;">Tests failed: 4</span>
<span class="t" style="top:259.5px;line-height:20px;font-size:15px;color:#bbbbbb;left:547px;letter-spacing:-0.395px;">, passed: 12</span>
<span class="t" style="top:259.5px;line-height:20px;font-size:15px;color:#7d8082;left:624px;letter-spacing:-0.343px;"> of 16 tests – 4 sec 723 ms</span>
<div style="left:64px;top:287px;width:1830px;height:2px;background:#323436;"></div>
<svg class="i" style="left:35px;top:292px;" width="20" height="20" viewBox="0 0 16 16"><circle cx="9.9" cy="7.6" r="5.9" fill="#c75450"/><rect x="8.9" y="3.8" width="2.6" height="5.4" fill="#3c3f41"/><rect x="8.9" y="10.2" width="2.6" height="2" fill="#3c3f41"/><path d="M0.6 5.8 L8.4 10.6 L0.6 15.6 Z" fill="#499c54" stroke="#3c3f41" stroke-width="0.8"/></svg>
<svg class="i" style="left:35px;top:325px;" width="20" height="20" viewBox="0 0 16 16"><path d="M12.9 5.6 A5.3 5.3 0 0 0 4.4 3.8" fill="none" stroke="#afb1b3" stroke-width="1.6"/><path d="M3.1 10.4 A5.3 5.3 0 0 0 11.6 12.2" fill="none" stroke="#afb1b3" stroke-width="1.6"/><path d="M2.2 1.4 L6.6 2.6 L3.4 6 Z" fill="#afb1b3"/><path d="M13.8 14.6 L9.4 13.4 L12.6 10 Z" fill="#afb1b3"/><rect x="1.2" y="6" width="4.6" height="4" fill="#afb1b3"/><rect x="2.7" y="7.3" width="1.6" height="1.4" fill="#3c3f41"/><rect x="10.2" y="6" width="4.6" height="4" fill="#afb1b3"/><rect x="11.7" y="7.3" width="1.6" height="1.4" fill="#3c3f41"/></svg>
<svg class="i" style="left:35px;top:357px;" width="20" height="20" viewBox="0 0 16 16"><path d="M14.6 4.6 A4 4 0 0 1 9.2 8.6 L4 14.2 A1.6 1.6 0 0 1 1.8 12 L7.4 6.8 A4 4 0 0 1 11.4 1.4 L9.2 3.8 L9.8 6.2 L12.2 6.8 Z" fill="#afb1b3"/></svg>
<div style="left:33px;top:388px;width:24px;height:1px;background:#555759;"></div>
<svg class="i" style="left:35px;top:399px;" width="20" height="20" viewBox="0 0 16 16"><rect x="3" y="3" width="10" height="10" fill="#5a5d5f"/></svg>
<svg class="i" style="left:35px;top:431px;" width="20" height="20" viewBox="0 0 16 16"><path d="M1.5 4.5 H4.6 L5.8 2.6 H10.2 L11.4 4.5 H14.5 V13.5 H1.5 Z" fill="#5a5d5f"/><circle cx="8" cy="8.8" r="2.9" fill="#3c3f41"/><circle cx="8" cy="8.8" r="1.6" fill="#5a5d5f"/></svg>
<svg class="i" style="left:35px;top:464px;" width="20" height="20" viewBox="0 0 16 16"><ellipse cx="7" cy="8.4" rx="3.4" ry="4.4" fill="#5a5d5f"/><path d="M4.8 3.4 A2.2 2.2 0 0 1 9.2 3.4 Z" fill="#5a5d5f"/><path d="M1.2 5.6 L4 6.8 M0.8 8.8 H3.6 M1.2 12.2 L4 10.8 M12.8 5.6 L10 6.8 M4.2 1.4 L5.6 3 M9.8 1.4 L8.4 3" stroke="#5a5d5f" stroke-width="1.2"/><path d="M8.6 11.4 H15.4 M12.4 8.6 L15.4 11.4 L12.4 14.2" stroke="#3c3f41" stroke-width="3.4" fill="none"/><path d="M8.6 11.4 H15 M12.4 9 L15 11.4 L12.4 13.8" stroke="#5a5d5f" stroke-width="1.5" fill="none"/></svg>
<svg class="i" style="left:35px;top:496px;" width="20" height="20" viewBox="0 0 16 16"><path d="M5 4.6 V2.4 H13.6 V13.6 H5 V11.4" fill="none" stroke="#5a5d5f" stroke-width="1.6"/><path d="M1.4 8 H9.4 M6.8 5.2 L9.8 8 L6.8 10.8" fill="none" stroke="#5a5d5f" stroke-width="1.6"/></svg>
<div style="left:33px;top:526px;width:24px;height:1px;background:#555759;"></div>
<svg class="i" style="left:35px;top:537px;" width="20" height="20" viewBox="0 0 16 16"><rect x="1.5" y="3.4" width="7.4" height="4.4" fill="#afb1b3"/><rect x="10.2" y="3.4" width="4.3" height="4.4" fill="#afb1b3"/><rect x="1.5" y="9" width="13" height="4.4" fill="#afb1b3"/></svg>
<div style="left:33px;top:568px;width:24px;height:1px;background:#555759;"></div>
<svg class="i" style="left:35px;top:578px;" width="20" height="20" viewBox="0 0 16 16"><path d="M9.4 1.4 L14.6 6.6 L13.2 7.4 L11.4 7 L9 9.6 L9.4 12.4 L8.2 13.4 L2.6 7.8 L3.6 6.6 L6.4 7 L9 4.6 L8.6 2.8 Z" fill="#afb1b3"/><path d="M5.6 10.4 L1.6 14.4" stroke="#afb1b3" stroke-width="1.5"/></svg>
<div style="left:64px;top:289px;width:367px;height:807px;background:#3c3f41;"></div>
<div style="left:64px;top:689px;width:365px;height:25px;background:#4b6eaf;"></div>
<div style="left:429px;top:664px;width:1px;height:25px;background:#4b6eaf;"></div>
<svg class="i" style="left:68px;top:292.5px;" width="16" height="16" viewBox="0 0 16 16"><path d="M3.5 5.5 L8 10 L12.5 5.5" fill="none" stroke="#afb1b3" stroke-width="1.4"/></svg>
<svg class="i" style="left:91px;top:291px;" width="20" height="20" viewBox="0 0 16 16"><circle cx="8" cy="8" r="6.6" fill="#d9a343"/><path d="M5.2 5.2 L10.8 10.8 M10.8 5.2 L5.2 10.8" stroke="#3c3f41" stroke-width="1.5" fill="none"/></svg>
<span class="t" style="top:292.5px;line-height:20px;font-size:15px;color:#bbbbbb;left:117px;letter-spacing:-0.026px;">&lt;default package&gt;</span>
<span class="t" style="top:294.5px;line-height:17px;font-size:13px;color:#7f8284;left:351.5px;letter-spacing:-0.361px;">4 sec 723 ms</span>
<svg class="i" style="left:90px;top:317.5px;" width="16" height="16" viewBox="0 0 16 16"><path d="M3.5 5.5 L8 10 L12.5 5.5" fill="none" stroke="#afb1b3" stroke-width="1.4"/></svg>
<svg class="i" style="left:113.5px;top:316px;" width="20" height="20" viewBox="0 0 16 16"><circle cx="8" cy="8" r="6.6" fill="#d9a343"/><path d="M5.2 5.2 L10.8 10.8 M10.8 5.2 L5.2 10.8" stroke="#3c3f41" stroke-width="1.5" fill="none"/></svg>
<span class="t" style="top:317.5px;line-height:20px;font-size:15px;color:#bbbbbb;left:138px;letter-spacing:-0.181px;">MinFourHeapTests</span>
<span class="t" style="top:319.5px;line-height:17px;font-size:13px;color:#7f8284;left:351.5px;letter-spacing:-0.361px;">4 sec 723 ms</span>
<svg class="i" style="left:136.5px;top:341px;" width="20" height="20" viewBox="0 0 16 16"><path d="M2.4 8.2 L6.2 11.8 L13.6 3.6" fill="none" stroke="#499c54" stroke-width="2.6"/></svg>
<div class="clip" style="left:160px;top:342.5px;width:220px;height:20px;"><span class="t" style="top:0;line-height:20px;font-size:15px;color:#bbbbbb;left:0;letter-spacing:0.067px;">Does not use or import disallowed</span></div>
<span class="t" style="top:344.5px;line-height:17px;font-size:13px;color:#7f8284;left:384.5px;letter-spacing:-0.440px;">325 ms</span>
<svg class="i" style="left:136.5px;top:366px;" width="20" height="20" viewBox="0 0 16 16"><path d="M2.4 8.2 L6.2 11.8 L13.6 3.6" fill="none" stroke="#499c54" stroke-width="2.6"/></svg>
<div class="clip" style="left:160px;top:367.5px;width:227.3px;height:20px;"><span class="t" style="top:0;line-height:20px;font-size:15px;color:#bbbbbb;left:0;letter-spacing:0.032px;">Does not use or import disallowed</span></div>
<span class="t" style="top:369.5px;line-height:17px;font-size:13px;color:#7f8284;left:391.5px;letter-spacing:-0.481px;">57 ms</span>
<svg class="i" style="left:136.5px;top:391px;" width="20" height="20" viewBox="0 0 16 16"><path d="M2.4 8.2 L6.2 11.8 L13.6 3.6" fill="none" stroke="#499c54" stroke-width="2.6"/></svg>
<span class="t" style="top:392.5px;line-height:20px;font-size:15px;color:#bbbbbb;left:160px;letter-spacing:-0.030px;">The public interface is correct</span>
<svg class="i" style="left:136.5px;top:416px;" width="20" height="20" viewBox="0 0 16 16"><path d="M2.4 8.2 L6.2 11.8 L13.6 3.6" fill="none" stroke="#499c54" stroke-width="2.6"/></svg>
<div class="clip" style="left:160px;top:417.5px;width:234px;height:20px;"><span class="t" style="top:0;line-height:20px;font-size:15px;color:#bbbbbb;left:0;letter-spacing:-0.077px;">Calling increaseKey with a lower pri</span></div>
<span class="t" style="top:419.5px;line-height:17px;font-size:13px;color:#7f8284;left:398.5px;letter-spacing:-0.543px;">8 ms</span>
<svg class="i" style="left:136.5px;top:441px;" width="20" height="20" viewBox="0 0 16 16"><path d="M2.4 8.2 L6.2 11.8 L13.6 3.6" fill="none" stroke="#499c54" stroke-width="2.6"/></svg>
<div class="clip" style="left:160px;top:442.5px;width:270px;height:20px;"><span class="t" style="top:0;line-height:20px;font-size:15px;color:#bbbbbb;left:0;letter-spacing:0.130px;">Attempting to enqueue duplicate elemen</span></div>
<svg class="i" style="left:136.5px;top:466px;" width="20" height="20" viewBox="0 0 16 16"><path d="M2.4 8.2 L6.2 11.8 L13.6 3.6" fill="none" stroke="#499c54" stroke-width="2.6"/></svg>
<div class="clip" style="left:160px;top:467.5px;width:234px;height:20px;"><span class="t" style="top:0;line-height:20px;font-size:15px;color:#bbbbbb;left:0;letter-spacing:0.302px;">Attempting to modify the priority o</span></div>
<span class="t" style="top:469.5px;line-height:17px;font-size:13px;color:#7f8284;left:398.5px;letter-spacing:-0.543px;">8 ms</span>
<svg class="i" style="left:136.5px;top:491px;" width="20" height="20" viewBox="0 0 16 16"><path d="M2.4 8.2 L6.2 11.8 L13.6 3.6" fill="none" stroke="#499c54" stroke-width="2.6"/></svg>
<div class="clip" style="left:160px;top:492.5px;width:234px;height:20px;"><span class="t" style="top:0;line-height:20px;font-size:15px;color:#bbbbbb;left:0;letter-spacing:-0.161px;">Smoke test enqueue while checking</span></div>
<span class="t" style="top:494.5px;line-height:17px;font-size:13px;color:#7f8284;left:398.5px;letter-spacing:-0.543px;">8 ms</span>
<svg class="i" style="left:136.5px;top:516px;" width="20" height="20" viewBox="0 0 16 16"><path d="M2.4 8.2 L6.2 11.8 L13.6 3.6" fill="none" stroke="#499c54" stroke-width="2.6"/></svg>
<div class="clip" style="left:160px;top:517.5px;width:270px;height:20px;"><span class="t" style="top:0;line-height:20px;font-size:15px;color:#bbbbbb;left:0;letter-spacing:-0.101px;">Smoke test dequeue while checking inter</span></div>
<svg class="i" style="left:136.5px;top:541px;" width="20" height="20" viewBox="0 0 16 16"><path d="M2.4 8.2 L6.2 11.8 L13.6 3.6" fill="none" stroke="#499c54" stroke-width="2.6"/></svg>
<div class="clip" style="left:160px;top:542.5px;width:270px;height:20px;"><span class="t" style="top:0;line-height:20px;font-size:15px;color:#bbbbbb;left:0;letter-spacing:-0.205px;">Smoke test decreaseKey while checking i</span></div>
<svg class="i" style="left:136.5px;top:566px;" width="20" height="20" viewBox="0 0 16 16"><path d="M2.4 8.2 L6.2 11.8 L13.6 3.6" fill="none" stroke="#499c54" stroke-width="2.6"/></svg>
<div class="clip" style="left:160px;top:567.5px;width:270px;height:20px;"><span class="t" style="top:0;line-height:20px;font-size:15px;color:#bbbbbb;left:0;letter-spacing:-0.204px;">Smoke test increaseKey while checking in</span></div>
<svg class="i" style="left:136.5px;top:591px;" width="20" height="20" viewBox="0 0 16 16"><path d="M2.4 8.2 L6.2 11.8 L13.6 3.6" fill="none" stroke="#499c54" stroke-width="2.6"/></svg>
<div class="clip" style="left:160px;top:592.5px;width:270px;height:20px;"><span class="t" style="top:0;line-height:20px;font-size:15px;color:#bbbbbb;left:0;letter-spacing:0.089px;">Dequeueing with no further percolation l</span></div>
<svg class="i" style="left:136.5px;top:616px;" width="20" height="20" viewBox="0 0 16 16"><path d="M2.4 8.2 L6.2 11.8 L13.6 3.6" fill="none" stroke="#499c54" stroke-width="2.6"/></svg>
<div class="clip" style="left:160px;top:617.5px;width:270px;height:20px;"><span class="t" style="top:0;line-height:20px;font-size:15px;color:#bbbbbb;left:0;letter-spacing:-0.212px;">Check that increaseKey that percolates ne</span></div>
<svg class="i" style="left:113px;top:642.5px;" width="16" height="16" viewBox="0 0 16 16"><path d="M3.5 5.5 L8 10 L12.5 5.5" fill="none" stroke="#afb1b3" stroke-width="1.4"/></svg>
<svg class="i" style="left:135.5px;top:641px;" width="20" height="20" viewBox="0 0 16 16"><circle cx="8" cy="8" r="6.6" fill="#d9a343"/><path d="M5.2 5.2 L10.8 10.8 M10.8 5.2 L5.2 10.8" stroke="#3c3f41" stroke-width="1.5" fill="none"/></svg>
<div class="clip" style="left:160px;top:642.5px;width:187.25px;height:20px;"><span class="t" style="top:0;line-height:20px;font-size:15px;color:#bbbbbb;left:0;letter-spacing:-0.378px;">Stress test increaseKey, decre</span></div>
<span class="t" style="top:644.5px;line-height:17px;font-size:13px;color:#7f8284;left:351.5px;letter-spacing:-0.361px;">3 sec 964 ms</span>
<svg class="i" style="left:159px;top:666px;" width="20" height="20" viewBox="0 0 16 16"><circle cx="8" cy="8" r="6.6" fill="#d9a343"/><path d="M5.2 5.2 L10.8 10.8 M10.8 5.2 L5.2 10.8" stroke="#3c3f41" stroke-width="1.5" fill="none"/></svg>
<div class="clip" style="left:183px;top:667.5px;width:164.25px;height:20px;"><span class="t" style="top:0;line-height:20px;font-size:15px;color:#bbbbbb;left:0;letter-spacing:-0.447px;">Stress test increaseKey an</span></div>
<span class="t" style="top:669.5px;line-height:17px;font-size:13px;color:#7f8284;left:351.5px;letter-spacing:-0.361px;">3 sec 622 ms</span>
<svg class="i" style="left:159px;top:691px;" width="20" height="20" viewBox="0 0 16 16"><circle cx="8" cy="8" r="6.6" fill="#d9a343"/><path d="M5.2 5.2 L10.8 10.8 M10.8 5.2 L5.2 10.8" stroke="#4b6eaf" stroke-width="1.5" fill="none"/></svg>
<div class="clip" style="left:183px;top:692.5px;width:197px;height:20px;"><span class="t" style="top:0;line-height:20px;font-size:15px;color:#d2d6dc;left:0;letter-spacing:-0.362px;">Stress test increaseKey and de</span></div>
<span class="t" style="top:694.5px;line-height:17px;font-size:13px;color:#c4cfe4;left:384.5px;letter-spacing:-0.440px;">342 ms</span>
<svg class="i" style="left:113px;top:717.5px;" width="16" height="16" viewBox="0 0 16 16"><path d="M3.5 5.5 L8 10 L12.5 5.5" fill="none" stroke="#afb1b3" stroke-width="1.4"/></svg>
<svg class="i" style="left:135.5px;top:716px;" width="20" height="20" viewBox="0 0 16 16"><circle cx="8" cy="8" r="6.6" fill="#d9a343"/><path d="M5.2 5.2 L10.8 10.8 M10.8 5.2 L5.2 10.8" stroke="#3c3f41" stroke-width="1.5" fill="none"/></svg>
<span class="t" style="top:717.5px;line-height:20px;font-size:15px;color:#bbbbbb;left:160px;letter-spacing:-0.309px;">Stress test enqueue, dequeue</span>
<span class="t" style="top:719.5px;line-height:17px;font-size:13px;color:#7f8284;left:384.5px;letter-spacing:-0.440px;">353 ms</span>
<svg class="i" style="left:159px;top:741px;" width="20" height="20" viewBox="0 0 16 16"><circle cx="8" cy="8" r="6.6" fill="#d9a343"/><path d="M5.2 5.2 L10.8 10.8 M10.8 5.2 L5.2 10.8" stroke="#3c3f41" stroke-width="1.5" fill="none"/></svg>
<div class="clip" style="left:183px;top:742.5px;width:197px;height:20px;"><span class="t" style="top:0;line-height:20px;font-size:15px;color:#bbbbbb;left:0;letter-spacing:-0.211px;">Stress test enqueue and deque</span></div>
<span class="t" style="top:744.5px;line-height:17px;font-size:13px;color:#7f8284;left:384.5px;letter-spacing:-0.440px;">185 ms</span>
<svg class="i" style="left:159px;top:766px;" width="20" height="20" viewBox="0 0 16 16"><circle cx="8" cy="8" r="6.6" fill="#d9a343"/><path d="M5.2 5.2 L10.8 10.8 M10.8 5.2 L5.2 10.8" stroke="#3c3f41" stroke-width="1.5" fill="none"/></svg>
<div class="clip" style="left:183px;top:767.5px;width:197px;height:20px;"><span class="t" style="top:0;line-height:20px;font-size:15px;color:#bbbbbb;left:0;letter-spacing:-0.211px;">Stress test enqueue and deque</span></div>
<span class="t" style="top:769.5px;line-height:17px;font-size:13px;color:#7f8284;left:384.5px;letter-spacing:-0.440px;">168 ms</span>
<div style="left:64px;top:1084px;width:168px;height:10px;background:#595b5d;"></div>
<div style="left:431px;top:289px;width:1427px;height:807px;background:#2b2b2b;"></div>
<div style="left:1858px;top:289px;width:36px;height:807px;background:#3c3f41;"></div>
<div class="clip" style="left:430px;top:289px;width:1428px;height:795px;">
<span class="t" style="left:16px;top:4.25px;line-height:22px;font-size:16.67px;font-family:'Liberation Mono', monospace;"><span style="color:#ff6b68">1272</span></span>
<span class="t" style="left:16px;top:31.75px;line-height:22px;font-size:16.67px;font-family:'Liberation Mono', monospace;"><span style="color:#ff6b68">8727</span></span>
<span class="t" style="left:16px;top:59.25px;line-height:22px;font-size:16.67px;font-family:'Liberation Mono', monospace;"><span style="color:#ff6b68">8727</span></span>
<span class="t" style="left:16px;top:86.75px;line-height:22px;font-size:16.67px;font-family:'Liberation Mono', monospace;"><span style="color:#a68a0d">Stress test increaseKey and decreaseKey with 10000 random elements and seed = 42</span></span>
<span class="t" style="left:16px;top:114.25px;line-height:22px;font-size:16.67px;font-family:'Liberation Mono', monospace;"><span style="color:#a68a0d">================================================================================</span></span>
<span class="t" style="left:16px;top:141.75px;line-height:22px;font-size:16.67px;font-family:'Liberation Mono', monospace;"><span style="color:#a68a0d">Creates random data to test the stability of increaseKey and decreaseKey</span></span>
<span class="t" style="left:16px;top:169.25px;line-height:22px;font-size:16.67px;font-family:'Liberation Mono', monospace;"><span style="color:#ae8abe">Hint: This test depends on the following being implemented correctly:</span></span>
<span class="t" style="left:16px;top:196.75px;line-height:22px;font-size:16.67px;font-family:'Liberation Mono', monospace;"><span style="color:#ae8abe">    - enqueue</span></span>
<span class="t" style="left:16px;top:224.25px;line-height:22px;font-size:16.67px;font-family:'Liberation Mono', monospace;"><span style="color:#ae8abe">    - size</span></span>
<span class="t" style="left:16px;top:251.75px;line-height:22px;font-size:16.67px;font-family:'Liberation Mono', monospace;"><span style="color:#ae8abe">    - dequeue</span></span>
<span class="t" style="left:16px;top:279.25px;line-height:22px;font-size:16.67px;font-family:'Liberation Mono', monospace;"><span style="color:#ae8abe">    - increaseKey</span></span>
<span class="t" style="left:16px;top:306.75px;line-height:22px;font-size:16.67px;font-family:'Liberation Mono', monospace;"><span style="color:#ae8abe">    - decreaseKey</span></span>
<span class="t" style="left:16px;top:334.25px;line-height:22px;font-size:16.67px;font-family:'Liberation Mono', monospace;"><span style="color:#ae8abe">    - data (field)</span></span>
<span class="t" style="left:16px;top:361.75px;line-height:22px;font-size:16.67px;font-family:'Liberation Mono', monospace;"><span style="color:#ae8abe">Hint: Make sure that all these methods exist (i.e. you have written a percolateDown (or equiv. name) method and findSmallestChild method) and</span></span>
<span class="t" style="left:16px;top:389.25px;line-height:22px;font-size:16.67px;font-family:'Liberation Mono', monospace;"><span style="color:#ae8abe">1. Cases where some or all of the children are null and/or out of bounds</span></span>
<span class="t" style="left:16px;top:416.75px;line-height:22px;font-size:16.67px;font-family:'Liberation Mono', monospace;"><span style="color:#ae8abe">2. Cases where all children have a higher priority than their parent, so no swapping should occur</span></span>
<span class="t" style="left:16px;top:471.75px;line-height:22px;font-size:16.67px;font-family:'Liberation Mono', monospace;"><span style="color:#ff6b68">org.opentest4j.AssertionFailedError: Priorities after adjusting them and dequeuing were incorrect. ==&gt;</span></span>
<span class="t" style="left:16px;top:499.25px;line-height:22px;font-size:16.67px;font-family:'Liberation Mono', monospace;"><span style="color:#bbbbbb">Expected :</span><span style="color:#ff6b68">-1.594735154E9</span></span>
<span class="t" style="left:16px;top:526.75px;line-height:22px;font-size:16.67px;font-family:'Liberation Mono', monospace;"><span style="color:#bbbbbb">Actual   :</span><span style="color:#ff6b68">-1.594866578E9</span></span>
<span class="t" style="left:16px;top:554.25px;line-height:22px;font-size:16.67px;font-family:'Liberation Mono', monospace;"><span style="color:#287bde;text-decoration:underline;text-underline-offset:3px;">&lt;Click to see difference&gt;</span></span>
<span class="t" style="left:16px;top:609.25px;line-height:22px;font-size:16.67px;font-family:'Liberation Mono', monospace;"><span style="color:#8c8c8c;background:#3a3a3a;padding:5px 0 2.5px;"> &lt;4 internal lines&gt;</span></span>
<span class="t" style="left:16px;top:636.75px;line-height:22px;font-size:16.67px;font-family:'Liberation Mono', monospace;"><span style="color:#ff6b68">    at edu.caltech.cs2.datastructures.MinFourHeapTests.stressTestIncreaseDecrease(</span><span style="color:#287bde;text-decoration:underline;text-underline-offset:3px;">MinFourHeapTests.java:378</span><span style="color:#ff6b68">)</span><span style="color:#8c8c8c;background:#3a3a3a;padding:5px 0 2.5px;"> &lt;81 internal lines&gt;</span></span>
<span class="t" style="left:16px;top:664.25px;line-height:22px;font-size:16.67px;font-family:'Liberation Mono', monospace;"><span style="color:#ff6b68">    at java.base/java.util.ArrayList.forEach(</span><span style="color:#8c8c8c;text-decoration:underline;text-underline-offset:3px;">ArrayList.java:1511</span><span style="color:#ff6b68">)</span><span style="color:#8c8c8c;background:#3a3a3a;padding:5px 0 2.5px;"> &lt;9 internal lines&gt;</span></span>
<span class="t" style="left:16px;top:691.75px;line-height:22px;font-size:16.67px;font-family:'Liberation Mono', monospace;"><span style="color:#ff6b68">    at java.base/java.util.ArrayList.forEach(</span><span style="color:#8c8c8c;text-decoration:underline;text-underline-offset:3px;">ArrayList.java:1511</span><span style="color:#ff6b68">)</span><span style="color:#8c8c8c;background:#3a3a3a;padding:5px 0 2.5px;"> &lt;23 internal lines&gt;</span></span>
</div>
<svg class="i" style="left:433px;top:903px;" width="10" height="10" viewBox="0 0 10 10"><rect x="0.5" y="0.5" width="9" height="9" fill="none" stroke="#6e6e6e" stroke-width="1"/><path d="M2.5 5 H7.5 M5 2.5 V7.5" stroke="#6e6e6e" stroke-width="1"/></svg>
<svg class="i" style="left:433px;top:930.5px;" width="10" height="10" viewBox="0 0 10 10"><rect x="0.5" y="0.5" width="9" height="9" fill="none" stroke="#6e6e6e" stroke-width="1"/><path d="M2.5 5 H7.5 M5 2.5 V7.5" stroke="#6e6e6e" stroke-width="1"/></svg>
<svg class="i" style="left:433px;top:958px;" width="10" height="10" viewBox="0 0 10 10"><rect x="0.5" y="0.5" width="9" height="9" fill="none" stroke="#6e6e6e" stroke-width="1"/><path d="M2.5 5 H7.5 M5 2.5 V7.5" stroke="#6e6e6e" stroke-width="1"/></svg>
<svg class="i" style="left:433px;top:985.5px;" width="10" height="10" viewBox="0 0 10 10"><rect x="0.5" y="0.5" width="9" height="9" fill="none" stroke="#6e6e6e" stroke-width="1"/><path d="M2.5 5 H7.5 M5 2.5 V7.5" stroke="#6e6e6e" stroke-width="1"/></svg>
<div style="left:447px;top:1084px;width:1142px;height:10px;background:#4f5051;"></div>
<svg class="i" style="left:1866px;top:295px;" width="20" height="20" viewBox="0 0 16 16"><path d="M8 14 V3.5 M3.6 7.6 L8 3.2 L12.4 7.6" fill="none" stroke="#afb1b3" stroke-width="1.7"/></svg>
<svg class="i" style="left:1866px;top:329px;" width="20" height="20" viewBox="0 0 16 16"><path d="M8 2 V12.5 M3.6 8.4 L8 12.8 L12.4 8.4" fill="none" stroke="#afb1b3" stroke-width="1.7"/></svg>
<svg class="i" style="left:1866px;top:361px;" width="20" height="20" viewBox="0 0 16 16"><path d="M2 3 H14" stroke="#afb1b3" stroke-width="1.6"/><path d="M2 7 H11.2 A2.6 2.6 0 0 1 11.2 12.2 H9.6" fill="none" stroke="#afb1b3" stroke-width="1.6"/><path d="M10.4 9.6 V14.8 L7.2 12.2 Z" fill="#afb1b3"/><path d="M2 12.2 H5" stroke="#afb1b3" stroke-width="1.6"/></svg>
<svg class="i" style="left:1866px;top:393px;" width="20" height="20" viewBox="0 0 16 16"><path d="M2 13.6 H14" stroke="#afb1b3" stroke-width="1.6"/><path d="M10.6 1.6 V8" stroke="#afb1b3" stroke-width="1.6"/><path d="M7.4 6.8 H13.8 L10.6 10.6 Z" fill="#afb1b3"/><path d="M2 5.6 H6 M2 9.4 H6" stroke="#afb1b3" stroke-width="1.6"/></svg>
<svg class="i" style="left:1866px;top:426px;" width="20" height="20" viewBox="0 0 16 16"><rect x="4" y="1.6" width="8" height="3" fill="#afb1b3"/><path d="M1 5.6 H15 V11.6 H12 V9 H4 V11.6 H1 Z" fill="#afb1b3"/><rect x="4.8" y="10" width="6.4" height="4" fill="none" stroke="#afb1b3" stroke-width="1.3"/></svg>
<svg class="i" style="left:1866px;top:458px;" width="20" height="20" viewBox="0 0 16 16"><path d="M4 5 H12 V13.4 A1 1 0 0 1 11 14.4 H5 A1 1 0 0 1 4 13.4 Z" fill="#afb1b3"/><rect x="3" y="2.8" width="10" height="1.5" fill="#afb1b3"/><rect x="6" y="1.6" width="4" height="1.4" fill="#afb1b3"/></svg>
<div style="left:0px;top:1096px;width:1920px;height:29px;background:#3c3f41;"></div>
<div style="left:0px;top:1096px;width:1920px;height:1px;background:#323232;"></div>
<div style="left:86px;top:1097px;width:66px;height:28px;background:#2d2f30;"></div>
<span class="t" style="top:1105px;line-height:17px;font-size:13px;color:#bbbbbb;left:59px;letter-spacing:-0.208px;">Git</span>
<span class="t" style="top:1105px;line-height:17px;font-size:13px;color:#e8e8e8;left:120px;letter-spacing:-0.620px;">Run</span>
<span class="t" style="top:1105px;line-height:17px;font-size:13px;color:#bbbbbb;left:186px;letter-spacing:0.138px;">Debug</span>
<span class="t" style="top:1105px;line-height:17px;font-size:13px;color:#bbbbbb;left:270px;letter-spacing:-0.332px;">TODO</span>
<span class="t" style="top:1105px;line-height:17px;font-size:13px;color:#bbbbbb;left:353px;letter-spacing:0.010px;">Problems</span>
<span class="t" style="top:1105px;line-height:17px;font-size:13px;color:#bbbbbb;left:455px;letter-spacing:0.109px;">Terminal</span>
<span class="t" style="top:1105px;line-height:17px;font-size:13px;color:#bbbbbb;left:551px;letter-spacing:-0.357px;">Services</span>
<span class="t" style="top:1105px;line-height:17px;font-size:13px;color:#bbbbbb;left:644px;letter-spacing:-0.184px;">Build</span>
<svg class="i" style="left:37px;top:1104px;" width="16" height="16" viewBox="0 0 16 16"><circle cx="4.6" cy="2.8" r="2.2" fill="#afb1b3"/><circle cx="4.6" cy="13.2" r="2.2" fill="#afb1b3"/><circle cx="11.6" cy="3.8" r="2.2" fill="#afb1b3"/><path d="M4.6 3 V13 M11.6 3.8 C11.6 8.4 4.6 7.4 4.6 11" fill="none" stroke="#afb1b3" stroke-width="2.2"/></svg>
<svg class="i" style="left:98px;top:1104px;" width="16" height="16" viewBox="0 0 16 16"><path d="M3 1.6 L14 8 L3 14.4 Z" fill="#afb1b3"/></svg>
<svg class="i" style="left:165px;top:1103px;" width="17" height="17" viewBox="0 0 16 16"><ellipse cx="8" cy="9.6" rx="4.7" ry="5.3" fill="#afb1b3"/><path d="M5 4.4 A3 3 0 0 1 11 4.4 Z" fill="#afb1b3"/><path d="M1.6 6.4 L4.4 7.8 M1.2 10 H4 M1.8 13.8 L4.4 12.2 M14.4 6.4 L11.6 7.8 M14.8 10 H12 M14.2 13.8 L11.6 12.2 M5 0.8 L6.6 3 M11 0.8 L9.4 3" stroke="#afb1b3" stroke-width="1.8" fill="none"/><path d="M5 8.4 H11 M5 11.2 H11" stroke="#afb1b3" stroke-width="1.2"/><path d="M3.6 5.2 H12.4" stroke="#afb1b3" stroke-width="0.9"/></svg>
<svg class="i" style="left:249.75px;top:1104.75px;" width="14.5" height="14.5" viewBox="0 0 16 16"><path d="M1 3.5 H3 M5 3.5 H15 M1 8 H3 M5 8 H15 M1 12.5 H3 M5 12.5 H15" stroke="#afb1b3" stroke-width="2.9"/></svg>
<svg class="i" style="left:332px;top:1104px;" width="15" height="15" viewBox="0 0 16 16"><circle cx="8" cy="8" r="7" fill="#afb1b3"/><rect x="7" y="3.6" width="2" height="5.6" fill="#3c3f41"/><rect x="7" y="10.4" width="2" height="2" fill="#3c3f41"/></svg>
<svg class="i" style="left:434px;top:1103.5px;" width="15" height="15" viewBox="0 0 16 16"><rect x="0.5" y="1.5" width="15" height="13" rx="1" fill="#afb1b3"/><path d="M3.4 5 L6.6 8 L3.4 11 M8 11.4 H12.4" stroke="#3c3f41" stroke-width="1.6" fill="none"/></svg>
<svg class="i" style="left:530px;top:1104px;" width="15" height="15" viewBox="0 0 16 16"><path d="M4 1 H12 L16 8 L12 15 H4 L0 8 Z" fill="#afb1b3"/><path d="M6 4.6 L11.6 8 L6 11.4 Z" fill="#3c3f41"/></svg>
<svg class="i" style="left:622px;top:1103.5px;" width="16" height="16" viewBox="0 0 16 16"><path d="M1.6 6.6 L6.8 1.4" stroke="#afb1b3" stroke-width="3.6" fill="none"/><path d="M6 5.2 L14.2 13.8" stroke="#afb1b3" stroke-width="2.7" fill="none"/></svg>
<div style="left:0px;top:1125px;width:1920px;height:25px;background:#3c3f41;"></div>
<div style="left:0px;top:1124px;width:1920px;height:1px;background:#454849;"></div>
<svg class="i" style="left:7px;top:1130px;" width="16" height="16" viewBox="0 0 16 16"><path d="M3.5 3.5 V0.8 H15.2 V12.5 H12.5" fill="none" stroke="#afb1b3" stroke-width="1.1"/><rect x="0.8" y="3.5" width="11.7" height="11.7" fill="none" stroke="#afb1b3" stroke-width="1.1"/></svg>
<span class="t" style="top:1127.5px;line-height:20px;font-size:15px;color:#bbbbbb;left:35px;letter-spacing:-0.208px;">Tests failed: 4, passed: 12 (18 minutes ago)</span>
<span class="t" style="top:1127.5px;line-height:20px;font-size:15px;color:#bbbbbb;left:1581px;letter-spacing:-0.482px;">138:18</span>
<span class="t" style="top:1127.5px;line-height:20px;font-size:15px;color:#bbbbbb;left:1639px;letter-spacing:-1.793px;">CRLF</span>
<span class="t" style="top:1127.5px;line-height:20px;font-size:15px;color:#bbbbbb;left:1686px;letter-spacing:-0.700px;">UTF-8</span>
<span class="t" style="top:1127.5px;line-height:20px;font-size:15px;color:#bbbbbb;left:1740px;letter-spacing:-0.506px;">4 spaces</span>
<span class="t" style="top:1127.5px;line-height:20px;font-size:15px;color:#bbbbbb;left:1833px;letter-spacing:-0.141px;">master</span>
<svg class="i" style="left:1810.5px;top:1127.5px;" width="17" height="17" viewBox="0 0 16 16"><circle cx="4.6" cy="2.8" r="1.9" fill="#afb1b3"/><circle cx="4.6" cy="13.2" r="1.9" fill="#afb1b3"/><circle cx="11.6" cy="3.8" r="1.9" fill="#afb1b3"/><path d="M4.6 3 V13 M11.6 3.8 C11.6 8.4 4.6 7.4 4.6 11" fill="none" stroke="#afb1b3" stroke-width="1.7"/></svg>
<svg class="i" style="left:1888.5px;top:1127px;" width="17" height="17" viewBox="0 0 16 16"><rect x="4" y="7.4" width="10" height="7" fill="#afb1b3"/><path d="M1.6 7.4 V4.6 A2.4 2.4 0 0 1 6.4 4.6 V7.4" fill="none" stroke="#afb1b3" stroke-width="1.5"/></svg>
<div style="left:0px;top:1150px;width:1920px;height:50px;background:#e4e8ed;background:linear-gradient(90deg,#e9ebef 0%,#e3e8ee 45%,#dbe7ee 70%,#d5e6ec 100%);"></div>
<svg class="i" style="left:20px;top:1165px;" width="20" height="20" viewBox="0 0 20 20"><path d="M0 2.8 L8.6 1.6 V9.4 H0 Z M9.8 1.4 L20 0 V9.4 H9.8 Z M0 10.6 H8.6 V18.4 L0 17.2 Z M9.8 10.6 H20 V20 L9.8 18.6 Z" fill="#000"/></svg>
<div style="left:61px;top:1150px;width:358px;height:49px;background:#ffffff;box-sizing:border-box;border:1px solid #c3c7cc;"></div>
<svg class="i" style="left:74px;top:1164px;" width="22" height="22" viewBox="0 0 22 22"><circle cx="13.6" cy="8.4" r="6.4" fill="none" stroke="#1a1a1a" stroke-width="1.4"/><path d="M9 13 L1 21" stroke="#1a1a1a" stroke-width="1.6"/></svg>
<span class="t" style="top:1163.5px;line-height:24px;font-size:18.5px;color:#2c2c2c;left:110px;letter-spacing:-0.027px;">Type here to search</span>
<svg class="i" style="left:439px;top:1164px;" width="22" height="22" viewBox="0 0 22 22"><rect x="1.5" y="5.5" width="12" height="11" fill="none" stroke="#111" stroke-width="1.3"/><path d="M1 1.8 H14 M1 20.2 H14 M19.5 1 V7 M19.5 11 V21" stroke="#111" stroke-width="1.3"/><rect x="18" y="7.4" width="3" height="3" fill="#111"/></svg>
<div style="left:856px;top:1150px;width:61px;height:50px;background:#f6f8fa;"></div>
<div style="left:489px;top:1197px;width:51px;height:3px;background:#0078d7;"></div>
<div style="left:675px;top:1197px;width:51px;height:3px;background:#0078d7;"></div>
<div style="left:737px;top:1197px;width:51px;height:3px;background:#0078d7;"></div>
<div style="left:799px;top:1197px;width:51px;height:3px;background:#0078d7;"></div>
<div style="left:856px;top:1197px;width:61px;height:3px;background:#0078d7;"></div>
<div style="left:923px;top:1197px;width:51px;height:3px;background:#0078d7;"></div>
<div style="left:985px;top:1197px;width:51px;height:3px;background:#0078d7;"></div>
<svg class="i" style="left:499px;top:1161px;" width="30" height="26" viewBox="0 0 30 26"><path d="M1 2.5 A1.5 1.5 0 0 1 2.5 1 H11 L13.5 4 H1 Z" fill="#e8a317"/><rect x="1" y="4" width="28" height="20" rx="1.5" fill="#ffd75e"/><path d="M6 24 V15 H24 V24 Z" fill="#3c8fd8"/><rect x="10.5" y="18.5" width="9" height="5.5" fill="#ffd75e"/></svg>
<svg class="i" style="left:561px;top:1160px;" width="30" height="30" viewBox="0 0 30 30"><circle cx="15" cy="15" r="13.6" fill="none" stroke="#111" stroke-width="2.2"/><text x="14.8" y="18.4" text-anchor="middle" font-family="Liberation Sans,sans-serif" font-weight="700" font-size="9" fill="#111" letter-spacing="-0.7">DELL</text></svg>
<svg class="i" style="left:622px;top:1159px;" width="32" height="32" viewBox="0 0 32 32"><defs><linearGradient id="edg" x1="0" y1="0" x2="1" y2="1"><stop offset="0" stop-color="#35c1f1"/><stop offset="0.5" stop-color="#1b9de2"/><stop offset="1" stop-color="#0c59a4"/></linearGradient><linearGradient id="edg2" x1="0" y1="0" x2="1" y2="0"><stop offset="0" stop-color="#2aa8e0"/><stop offset="1" stop-color="#6bdc51"/></linearGradient></defs><circle cx="16" cy="16" r="15" fill="url(#edg)"/><path d="M2 12 C5 3 14 0 21 2 C28 4 31.5 10 31 15 C30 20 24 21.5 20 20 C22 18 21.6 14 18 12.6 C13 10.8 6 13 4 20 C2 17 1.4 14.6 2 12 Z" fill="url(#edg2)"/><path d="M11.5 18 C11 24 16 29 24 27.6 C20 32 11 31.5 6.4 26 C3 21.6 4.6 15 9 12.6 C13 10.6 18 11.6 19.6 14.4 C16 13.6 12 14.6 11.5 18 Z" fill="#0b5cab"/><path d="M17.2 12.2 C14.6 15.4 16.4 20.6 22.4 20.8 C26.6 20.9 30 19.2 31.6 17 C31.8 15.6 31.4 14.6 31 14 C28.6 16.8 24.6 17.6 21.6 16.8 C19 16 18 14.2 18.6 12.2 Z" fill="#e4e8ed"/></svg>
<svg class="i" style="left:684px;top:1159.5px;" width="33" height="33" viewBox="0 0 31 31"><circle cx="15" cy="15" r="14" fill="#db4437"/><path d="M15 15 L2.9 8 A14 14 0 0 0 8 27.1 Z" fill="#0f9d58"/><path d="M15 15 L8 27.1 A14 14 0 0 0 29 15 Z" fill="#ffcd40"/><path d="M15 15 L29 15 A14 14 0 0 0 27.1 8 L15 8 Z" fill="#db4437"/><path d="M2.9 8 A14 14 0 0 1 27.1 8 L15 8 Z" fill="#db4437"/><circle cx="15" cy="15" r="6.6" fill="#f1f1f1"/><circle cx="15" cy="15" r="5.2" fill="#4285f4"/><circle cx="22" cy="22.5" r="8.6" fill="#7f8a96"/><path d="M14.4 26.4 L19.6 18.6 L22.6 22 L24.6 20.4 L29.6 26.4 A8.6 8.6 0 0 1 14.4 26.4 Z" fill="#4a5258"/><path d="M17.8 21.2 L19.6 18.6 L21.8 21 Z" fill="#dfe3e6"/></svg>
<svg class="i" style="left:746px;top:1159.5px;" width="33" height="33" viewBox="0 0 31 31"><circle cx="15" cy="15" r="14" fill="#db4437"/><path d="M15 15 L2.9 8 A14 14 0 0 0 8 27.1 Z" fill="#0f9d58"/><path d="M15 15 L8 27.1 A14 14 0 0 0 29 15 Z" fill="#ffcd40"/><path d="M15 15 L29 15 A14 14 0 0 0 27.1 8 L15 8 Z" fill="#db4437"/><path d="M2.9 8 A14 14 0 0 1 27.1 8 L15 8 Z" fill="#db4437"/><circle cx="15" cy="15" r="6.6" fill="#f1f1f1"/><circle cx="15" cy="15" r="5.2" fill="#4285f4"/><circle cx="22" cy="22.5" r="8.6" fill="#56b8c4"/><circle cx="22" cy="19.6" r="2.9" fill="#14282c"/><path d="M16.4 27.6 C16.4 23.8 19.4 23.4 22 23.4 C24.6 23.4 27.6 23.8 27.6 27.6 Z" fill="#14282c"/></svg>
<svg class="i" style="left:810px;top:1160px;" width="28" height="28" viewBox="0 0 28 28"><rect width="28" height="27" rx="4.5" fill="#b30b00"/><path d="M5.5 19.5 C9 17 12.5 12.5 13.4 7.6 C13.8 5.6 15.6 5.8 15.4 7.8 C15 11.5 18 16.6 22.4 17.4 C24 17.8 23.6 19.4 22 19 C17 17.6 10 18.4 6.4 20.8 C5 21.6 4.4 20.4 5.5 19.5 Z" fill="none" stroke="#fff" stroke-width="1.4"/></svg>
<svg class="i" style="left:873px;top:1162px;" width="26" height="26" viewBox="0 0 26 26"><defs><linearGradient id="ijg2" x1="0" y1="1" x2="1" y2="0"><stop offset="0" stop-color="#0a7bf6"/><stop offset="0.45" stop-color="#a036d8"/><stop offset="0.8" stop-color="#fe315d"/><stop offset="1" stop-color="#f97a12"/></linearGradient></defs><rect width="26" height="26" fill="url(#ijg2)"/><rect x="2.6" y="2.6" width="20.8" height="20.8" fill="#000"/><text x="5" y="13.4" font-family="Liberation Mono,monospace" font-weight="700" font-size="9.6" fill="#fff">IJ</text><rect x="5.4" y="18.6" width="7.6" height="1.6" fill="#fff"/></svg>
<svg class="i" style="left:933px;top:1160px;" width="32" height="32" viewBox="0 0 32 32"><circle cx="15" cy="15" r="15" fill="#5865f2"/><path d="M8 10 C11 8.4 19 8.4 22 10 C24 13 25 17 24.6 20.6 C22.6 22 21 22.4 20 22.4 L19 20.6 C16.6 21.2 13.4 21.2 11 20.6 L10 22.4 C9 22.4 7.4 22 5.4 20.6 C5 17 6 13 8 10 Z" fill="#fff"/><ellipse cx="11.6" cy="16" rx="2" ry="2.3" fill="#5865f2"/><ellipse cx="18.4" cy="16" rx="2" ry="2.3" fill="#5865f2"/><circle cx="22.6" cy="22.6" r="9" fill="#e8474f"/><text x="22.6" y="26.6" text-anchor="middle" font-family="Liberation Sans,sans-serif" font-size="10.5" fill="#fff">9+</text></svg>
<svg class="i" style="left:996px;top:1161px;" width="28" height="28" viewBox="0 0 28 28"><defs><linearGradient id="phg" x1="0" y1="0" x2="1" y2="1"><stop offset="0" stop-color="#28a8ea"/><stop offset="1" stop-color="#5f86e0"/></linearGradient></defs><rect width="28" height="28" rx="1.5" fill="url(#phg)"/><circle cx="18.4" cy="6.6" r="2.6" fill="#fff"/><path d="M12 28 L21 13.6 L28 22 V28 Z" fill="#3f6fc4"/><path d="M0 21 L9 10.6 L22.6 26 L28 28 H0 Z" fill="#17457e"/></svg>
<svg class="i" style="left:1424px;top:1157px;" width="34" height="34" viewBox="0 0 34 34"><defs><linearGradient id="mng" x1="0.2" y1="0" x2="0.6" y2="1"><stop offset="0" stop-color="#fbc535"/><stop offset="1" stop-color="#f28a1c"/></linearGradient></defs><path d="M19 6 A13 13 0 1 1 3.6 21 A10.4 10.4 0 0 0 19 6 Z" fill="url(#mng)"/><path d="M4 14.6 A3.4 3.4 0 0 1 5.6 8.2 A5 5 0 0 1 14.8 8.6 A3 3 0 0 1 14.6 14.6 Z" fill="#dfe8f6" stroke="#9db7e0" stroke-width="0.9"/></svg>
<span class="t" style="top:1164.5px;line-height:24px;font-size:18.5px;color:#1a1a1a;left:1465px;letter-spacing:-0.820px;">39°F</span>
<span class="t" style="top:1164.5px;line-height:24px;font-size:18.5px;color:#1a1a1a;left:1510px;letter-spacing:-0.225px;">Mostly clear</span>
<svg class="i" style="left:1626px;top:1167px;" width="20" height="14" viewBox="0 0 20 14"><path d="M2 11.6 L10 3.4 L18 11.6" fill="none" stroke="#111" stroke-width="1.5"/></svg>
<svg class="i" style="left:1653px;top:1164px;" width="24" height="22" viewBox="0 0 24 22"><path d="M2 3.4 L21.4 1 V17.6 L2 20 Z" fill="none" stroke="#111" stroke-width="1.2"/><path d="M8 12.6 A3.6 3.6 0 0 1 13.6 8.4 M14 6.4 V9 H11.4 M14.6 11 A3.6 3.6 0 0 1 9 14.6" fill="none" stroke="#111" stroke-width="1.1"/><circle cx="17.6" cy="17.4" r="4" fill="#2f7de1"/></svg>
<svg class="i" style="left:1685px;top:1169px;" width="22" height="12" viewBox="0 0 22 12"><rect x="0.7" y="0.7" width="18" height="10.6" fill="none" stroke="#111" stroke-width="1.3"/><rect x="19.2" y="3.6" width="2" height="4.8" fill="#111"/><rect x="2.6" y="2.6" width="3" height="6.8" fill="#111"/></svg>
<svg class="i" style="left:1717px;top:1165px;" width="20" height="20" viewBox="0 0 20 20"><circle cx="15" cy="16.4" r="1.6" fill="#111"/><path d="M9 17.4 A6.4 6.4 0 0 1 14.6 11 M5 17.4 A10.4 10.4 0 0 1 15.6 7 M1 17.4 A14.4 14.4 0 0 1 16.6 3" fill="none" stroke="#333" stroke-width="1.3"/></svg>
<svg class="i" style="left:1744px;top:1164px;" width="24" height="22" viewBox="0 0 24 22"><path d="M9 3 L12 0.6 L15.6 3 L12.4 5.4 Z M16 3 L19.4 0.6 L23 3 L19.6 5.4 Z M9 8 L12.4 5.6 L15.8 8 L12.4 10.4 Z M16 8 L19.6 5.6 L23 8 L19.6 10.4 Z M12.6 11.4 L16 9.4 L19.4 11.4 L16 13.8 Z" fill="#111"/><rect x="1" y="8" width="10" height="12" rx="1.6" fill="#d8162e"/><text x="6" y="17.6" text-anchor="middle" font-family="Liberation Sans,sans-serif" font-weight="700" font-size="8.6" fill="#fff">3</text></svg>
<span class="t" style="top:1154px;line-height:20px;font-size:15px;color:#1a1a1a;left:1786px;letter-spacing:-0.292px;">1:26 AM</span>
<span class="t" style="top:1177px;line-height:20px;font-size:15px;color:#1a1a1a;left:1778px;letter-spacing:0.141px;">2/26/2023</span>
<svg class="i" style="left:1868px;top:1164px;" width="34" height="34" viewBox="0 0 34 34"><path d="M1 1 H21 V17 H9 L1 24 Z" fill="#111"/><path d="M5 5.6 H17 M5 9 H17 M5 12.4 H13" stroke="#d5e6ec" stroke-width="1.2"/><circle cx="21" cy="20.4" r="9.2" fill="#e3e7ea" stroke="#777" stroke-width="1"/><text x="21" y="24.8" text-anchor="middle" font-family="Liberation Sans,sans-serif" font-size="12" fill="#111">4</text></svg>
<div style="left:1915px;top:1150px;width:1px;height:50px;background:#9aa7ad;"></div>
</body></html>
